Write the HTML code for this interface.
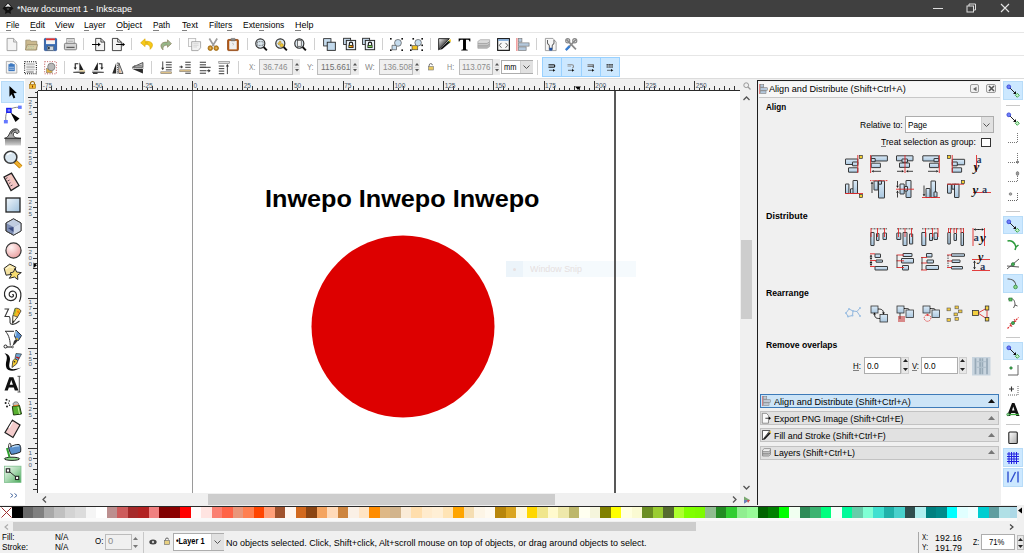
<!DOCTYPE html>
<html><head><meta charset="utf-8"><style>
*{box-sizing:border-box;margin:0;padding:0}
html,body{width:1024px;height:553px;overflow:hidden;background:#f0f0f0;font-family:"Liberation Sans",sans-serif;position:relative}
.a{position:absolute}
svg.a{overflow:visible}
.t{position:absolute;white-space:nowrap;line-height:1;transform-origin:0 0}
</style></head><body>
<div class="a" style="left:0px;top:0px;width:1024px;height:17px;background:#404040"></div>
<div class="a" style="left:0px;top:17px;width:1024px;height:15px;background:#fff"></div>
<div class="a" style="left:0px;top:32px;width:1024px;height:1px;background:#e6e6e6"></div>
<div class="a" style="left:0px;top:33px;width:1024px;height:22px;background:#fff"></div>
<div class="a" style="left:0px;top:55px;width:1024px;height:1px;background:#e6e6e6"></div>
<div class="a" style="left:0px;top:56px;width:1024px;height:22px;background:#fff"></div>
<div class="a" style="left:0px;top:78px;width:1024px;height:1px;background:#dcdcdc"></div>
<div class="a" style="left:0px;top:79px;width:25px;height:426px;background:#fff"></div>
<div class="a" style="left:25px;top:79px;width:715px;height:12px;background:#f0f0f0"></div>
<div class="a" style="left:25px;top:91px;width:13px;height:402px;background:#f0f0f0"></div>
<div class="a" style="left:38px;top:91px;width:702px;height:402px;background:#fff"></div>
<div class="a" style="left:740px;top:79px;width:17px;height:426px;background:#f0f0f0"></div>
<div class="a" style="left:25px;top:493px;width:715px;height:12px;background:#f0f0f0"></div>
<div class="a" style="left:757px;top:80px;width:243px;height:425px;background:#f0f0f0"></div>
<div class="a" style="left:1001px;top:79px;width:23px;height:426px;background:#fff"></div>
<div class="a" style="left:0px;top:506px;width:1017px;height:15px;background:#f9f9f9"></div>
<div class="a" style="left:0px;top:506px;width:1017px;height:1px;background:#2a2a2a"></div>
<div class="a" style="left:1017px;top:505px;width:7px;height:16px;background:#f0f0f0"></div>
<div class="a" style="left:0px;top:521px;width:1024px;height:32px;background:#f0f0f0"></div>
<div class="t" style="left:17.00px;top:4.37px;font-size:9.6px;color:#fff;transform:scaleX(0.9376);">*New document 1 - Inkscape</div>
<div class="t" style="left:6.20px;top:21.33px;font-size:9.3px;color:#000;transform:scaleX(0.8878);">File</div><div class="a" style="left:6.20px;top:30.40px;width:5.04px;height:1px;background:#808080"></div>
<div class="t" style="left:30.00px;top:21.33px;font-size:9.3px;color:#000;transform:scaleX(0.9363);">Edit</div><div class="a" style="left:30.00px;top:30.40px;width:5.81px;height:1px;background:#808080"></div>
<div class="t" style="left:55.00px;top:21.33px;font-size:9.3px;color:#000;transform:scaleX(0.9608);">View</div><div class="a" style="left:55.00px;top:30.40px;width:5.96px;height:1px;background:#808080"></div>
<div class="t" style="left:84.40px;top:21.33px;font-size:9.3px;color:#000;transform:scaleX(0.9288);">Layer</div><div class="a" style="left:84.40px;top:30.40px;width:4.80px;height:1px;background:#808080"></div>
<div class="t" style="left:116.40px;top:21.33px;font-size:9.3px;color:#000;transform:scaleX(0.9714);">Object</div><div class="a" style="left:116.40px;top:30.40px;width:7.02px;height:1px;background:#808080"></div>
<div class="t" style="left:153.20px;top:21.33px;font-size:9.3px;color:#000;transform:scaleX(0.8889);">Path</div><div class="a" style="left:153.20px;top:30.40px;width:5.51px;height:1px;background:#808080"></div>
<div class="t" style="left:181.70px;top:21.33px;font-size:9.3px;color:#000;transform:scaleX(0.9326);">Text</div><div class="a" style="left:181.70px;top:30.40px;width:5.30px;height:1px;background:#808080"></div>
<div class="t" style="left:208.50px;top:21.33px;font-size:9.3px;color:#000;transform:scaleX(0.9167);">Filters</div><div class="a" style="left:227.44px;top:30.40px;width:4.26px;height:1px;background:#808080"></div>
<div class="t" style="left:242.50px;top:21.33px;font-size:9.3px;color:#000;transform:scaleX(0.9082);">Extensions</div><div class="a" style="left:259.39px;top:30.40px;width:4.70px;height:1px;background:#808080"></div>
<div class="t" style="left:294.70px;top:21.33px;font-size:9.3px;color:#000;transform:scaleX(0.9623);">Help</div><div class="a" style="left:294.70px;top:30.40px;width:6.46px;height:1px;background:#808080"></div>
<div class="a" style="left:12.00px;top:507px;width:10.50px;height:11px;background:#000000"></div><div class="a" style="left:22.50px;top:507px;width:10.50px;height:11px;background:#696969"></div><div class="a" style="left:33.00px;top:507px;width:10.50px;height:11px;background:#808080"></div><div class="a" style="left:43.50px;top:507px;width:10.50px;height:11px;background:#a9a9a9"></div><div class="a" style="left:54.00px;top:507px;width:10.50px;height:11px;background:#c0c0c0"></div><div class="a" style="left:64.50px;top:507px;width:10.50px;height:11px;background:#d3d3d3"></div><div class="a" style="left:75.00px;top:507px;width:10.50px;height:11px;background:#dcdcdc"></div><div class="a" style="left:85.50px;top:507px;width:10.50px;height:11px;background:#f5f5f5"></div><div class="a" style="left:96.00px;top:507px;width:10.50px;height:11px;background:#ffffff"></div><div class="a" style="left:106.50px;top:507px;width:10.50px;height:11px;background:#bc8f8f"></div><div class="a" style="left:117.00px;top:507px;width:10.50px;height:11px;background:#cd5c5c"></div><div class="a" style="left:127.50px;top:507px;width:10.50px;height:11px;background:#a52a2a"></div><div class="a" style="left:138.00px;top:507px;width:10.50px;height:11px;background:#b22222"></div><div class="a" style="left:148.50px;top:507px;width:10.50px;height:11px;background:#f08080"></div><div class="a" style="left:159.00px;top:507px;width:10.50px;height:11px;background:#800000"></div><div class="a" style="left:169.50px;top:507px;width:10.50px;height:11px;background:#8b0000"></div><div class="a" style="left:180.00px;top:507px;width:10.50px;height:11px;background:#ff0000"></div><div class="a" style="left:190.50px;top:507px;width:10.50px;height:11px;background:#fffafa"></div><div class="a" style="left:201.00px;top:507px;width:10.50px;height:11px;background:#ffe4e1"></div><div class="a" style="left:211.50px;top:507px;width:10.50px;height:11px;background:#fa8072"></div><div class="a" style="left:222.00px;top:507px;width:10.50px;height:11px;background:#ff6347"></div><div class="a" style="left:232.50px;top:507px;width:10.50px;height:11px;background:#e9967a"></div><div class="a" style="left:243.00px;top:507px;width:10.50px;height:11px;background:#ff7f50"></div><div class="a" style="left:253.50px;top:507px;width:10.50px;height:11px;background:#ff4500"></div><div class="a" style="left:264.00px;top:507px;width:10.50px;height:11px;background:#ffa07a"></div><div class="a" style="left:274.50px;top:507px;width:10.50px;height:11px;background:#a0522d"></div><div class="a" style="left:285.00px;top:507px;width:10.50px;height:11px;background:#fff5ee"></div><div class="a" style="left:295.50px;top:507px;width:10.50px;height:11px;background:#d2691e"></div><div class="a" style="left:306.00px;top:507px;width:10.50px;height:11px;background:#8b4513"></div><div class="a" style="left:316.50px;top:507px;width:10.50px;height:11px;background:#f4a460"></div><div class="a" style="left:327.00px;top:507px;width:10.50px;height:11px;background:#ffdab9"></div><div class="a" style="left:337.50px;top:507px;width:10.50px;height:11px;background:#cd853f"></div><div class="a" style="left:348.00px;top:507px;width:10.50px;height:11px;background:#faf0e6"></div><div class="a" style="left:358.50px;top:507px;width:10.50px;height:11px;background:#ffe4c4"></div><div class="a" style="left:369.00px;top:507px;width:10.50px;height:11px;background:#ff8c00"></div><div class="a" style="left:379.50px;top:507px;width:10.50px;height:11px;background:#deb887"></div><div class="a" style="left:390.00px;top:507px;width:10.50px;height:11px;background:#d2b48c"></div><div class="a" style="left:400.50px;top:507px;width:10.50px;height:11px;background:#faebd7"></div><div class="a" style="left:411.00px;top:507px;width:10.50px;height:11px;background:#ffdead"></div><div class="a" style="left:421.50px;top:507px;width:10.50px;height:11px;background:#ffebcd"></div><div class="a" style="left:432.00px;top:507px;width:10.50px;height:11px;background:#ffefd5"></div><div class="a" style="left:442.50px;top:507px;width:10.50px;height:11px;background:#ffe4b5"></div><div class="a" style="left:453.00px;top:507px;width:10.50px;height:11px;background:#ffa500"></div><div class="a" style="left:463.50px;top:507px;width:10.50px;height:11px;background:#f5deb3"></div><div class="a" style="left:474.00px;top:507px;width:10.50px;height:11px;background:#fdf5e6"></div><div class="a" style="left:484.50px;top:507px;width:10.50px;height:11px;background:#fffaf0"></div><div class="a" style="left:495.00px;top:507px;width:10.50px;height:11px;background:#b8860b"></div><div class="a" style="left:505.50px;top:507px;width:10.50px;height:11px;background:#daa520"></div><div class="a" style="left:516.00px;top:507px;width:10.50px;height:11px;background:#fff8dc"></div><div class="a" style="left:526.50px;top:507px;width:10.50px;height:11px;background:#ffd700"></div><div class="a" style="left:537.00px;top:507px;width:10.50px;height:11px;background:#f0e68c"></div><div class="a" style="left:547.50px;top:507px;width:10.50px;height:11px;background:#fffacd"></div><div class="a" style="left:558.00px;top:507px;width:10.50px;height:11px;background:#eee8aa"></div><div class="a" style="left:568.50px;top:507px;width:10.50px;height:11px;background:#bdb76b"></div><div class="a" style="left:579.00px;top:507px;width:10.50px;height:11px;background:#fffff0"></div><div class="a" style="left:589.50px;top:507px;width:10.50px;height:11px;background:#f5f5dc"></div><div class="a" style="left:600.00px;top:507px;width:10.50px;height:11px;background:#808000"></div><div class="a" style="left:610.50px;top:507px;width:10.50px;height:11px;background:#ffff00"></div><div class="a" style="left:621.00px;top:507px;width:10.50px;height:11px;background:#ffffe0"></div><div class="a" style="left:631.50px;top:507px;width:10.50px;height:11px;background:#fafad2"></div><div class="a" style="left:642.00px;top:507px;width:10.50px;height:11px;background:#6b8e23"></div><div class="a" style="left:652.50px;top:507px;width:10.50px;height:11px;background:#9acd32"></div><div class="a" style="left:663.00px;top:507px;width:10.50px;height:11px;background:#556b2f"></div><div class="a" style="left:673.50px;top:507px;width:10.50px;height:11px;background:#adff2f"></div><div class="a" style="left:684.00px;top:507px;width:10.50px;height:11px;background:#7fff00"></div><div class="a" style="left:694.50px;top:507px;width:10.50px;height:11px;background:#7cfc00"></div><div class="a" style="left:705.00px;top:507px;width:10.50px;height:11px;background:#8fbc8f"></div><div class="a" style="left:715.50px;top:507px;width:10.50px;height:11px;background:#228b22"></div><div class="a" style="left:726.00px;top:507px;width:10.50px;height:11px;background:#32cd32"></div><div class="a" style="left:736.50px;top:507px;width:10.50px;height:11px;background:#90ee90"></div><div class="a" style="left:747.00px;top:507px;width:10.50px;height:11px;background:#98fb98"></div><div class="a" style="left:757.50px;top:507px;width:10.50px;height:11px;background:#006400"></div><div class="a" style="left:768.00px;top:507px;width:10.50px;height:11px;background:#008000"></div><div class="a" style="left:778.50px;top:507px;width:10.50px;height:11px;background:#00ff00"></div><div class="a" style="left:789.00px;top:507px;width:10.50px;height:11px;background:#f0fff0"></div><div class="a" style="left:799.50px;top:507px;width:10.50px;height:11px;background:#2e8b57"></div><div class="a" style="left:810.00px;top:507px;width:10.50px;height:11px;background:#3cb371"></div><div class="a" style="left:820.50px;top:507px;width:10.50px;height:11px;background:#00ff7f"></div><div class="a" style="left:831.00px;top:507px;width:10.50px;height:11px;background:#f5fffa"></div><div class="a" style="left:841.50px;top:507px;width:10.50px;height:11px;background:#00fa9a"></div><div class="a" style="left:852.00px;top:507px;width:10.50px;height:11px;background:#66cdaa"></div><div class="a" style="left:862.50px;top:507px;width:10.50px;height:11px;background:#7fffd4"></div><div class="a" style="left:873.00px;top:507px;width:10.50px;height:11px;background:#40e0d0"></div><div class="a" style="left:883.50px;top:507px;width:10.50px;height:11px;background:#20b2aa"></div><div class="a" style="left:894.00px;top:507px;width:10.50px;height:11px;background:#48d1cc"></div><div class="a" style="left:904.50px;top:507px;width:10.50px;height:11px;background:#2f4f4f"></div><div class="a" style="left:915.00px;top:507px;width:10.50px;height:11px;background:#afeeee"></div><div class="a" style="left:925.50px;top:507px;width:10.50px;height:11px;background:#008080"></div><div class="a" style="left:936.00px;top:507px;width:10.50px;height:11px;background:#008b8b"></div><div class="a" style="left:946.50px;top:507px;width:10.50px;height:11px;background:#00ffff"></div><div class="a" style="left:957.00px;top:507px;width:10.50px;height:11px;background:#e0ffff"></div><div class="a" style="left:967.50px;top:507px;width:10.50px;height:11px;background:#f0ffff"></div><div class="a" style="left:978.00px;top:507px;width:10.50px;height:11px;background:#00ced1"></div><div class="a" style="left:988.50px;top:507px;width:10.50px;height:11px;background:#5f9ea0"></div><div class="a" style="left:999.00px;top:507px;width:10.50px;height:11px;background:#b0e0e6"></div><div class="a" style="left:1009.50px;top:507px;width:7.50px;height:11px;background:#add8e6"></div>
<svg class="a" style="left:1px;top:507px" width="11" height="11" viewBox="0 0 11 11"><rect x="0" y="0" width="11" height="11" fill="#fff"/><path d="M0.5 0.5L10.5 10.5M10.5 0.5L0.5 10.5" stroke="#a03030" stroke-width="1"/></svg>
<svg class="a" style="left:1016px;top:506px" width="8" height="9" viewBox="0 0 8 9"><path d="M6 1.5L6 7.5L2 4.5Z" fill="#000"/></svg>
<svg class="a" style="left:5.50px;top:37.50px" width="11.50" height="13.00" viewBox="0 0 16 16" preserveAspectRatio="none"><path d="M1.5 0.5H10.5L15 5V15.5H1.5Z" fill="#f4f4f4" stroke="#8c8c8c"/><path d="M10.5 0.5V5H15" fill="#e0e0e0" stroke="#9a9a9a"/></svg>
<svg class="a" style="left:24.50px;top:38.50px" width="13.00" height="12.00" viewBox="0 0 16 16" preserveAspectRatio="none"><path d="M1 1.5H6L7.5 3H14.5V14.5H1Z" fill="#cbb98e" stroke="#9a8d6a"/><path d="M0.5 14.5L3 7.5H15.5L13.5 14.5Z" fill="#d9cba3" stroke="#978a66"/><path d="M4 10H12M3.5 12.5H11.5" stroke="#9ec09a" stroke-width="1" stroke-dasharray="1 1"/></svg>
<svg class="a" style="left:43.50px;top:37.50px" width="13.00" height="13.00" viewBox="0 0 16 16" preserveAspectRatio="none"><rect x="0.5" y="0.5" width="15" height="15" rx="1" fill="#3b6db4" stroke="#2a4f90"/><rect x="2.5" y="0.5" width="11" height="7" fill="#f4f4f4"/><rect x="2.5" y="0.5" width="11" height="2.2" fill="#e03030"/><rect x="4" y="10" width="8" height="5.5" fill="#cfd6dc" stroke="#304050" stroke-width="0.6"/><rect x="5" y="11" width="2" height="3" fill="#203040"/></svg>
<svg class="a" style="left:63.50px;top:37.50px" width="13.00" height="13.00" viewBox="0 0 16 16" preserveAspectRatio="none"><rect x="3.5" y="0.5" width="9" height="7" fill="#fafafa" stroke="#808080"/><path d="M5 2.5H11M5 4.5H11" stroke="#a0a0a0"/><rect x="0.5" y="6.5" width="15" height="8" rx="1.5" fill="#d4d4d4" stroke="#6a6a6a"/><path d="M3 11.5H13" stroke="#555" stroke-width="1.4"/></svg>
<div class="a" style="left:83px;top:38px;width:1px;height:12px;background:#d0d0d0"></div>
<svg class="a" style="left:91.50px;top:37.50px" width="13.00" height="13.00" viewBox="0 0 16 16" preserveAspectRatio="none"><path d="M4.5 0.5H11L15.5 5V15.5H4.5Z" fill="#f2f2f2" stroke="#222"/><path d="M11 0.5V5H15.5" fill="none" stroke="#222"/><path d="M0 8H10" stroke="#000" stroke-width="1.2"/><path d="M7.5 5.5L10.5 8L7.5 10.5Z" fill="#000"/></svg>
<svg class="a" style="left:111.50px;top:37.50px" width="13.00" height="13.00" viewBox="0 0 16 16" preserveAspectRatio="none"><path d="M0.5 0.5H7L11.5 5V15.5H0.5Z" fill="#f2f2f2" stroke="#222"/><path d="M7 0.5V5H11.5" fill="none" stroke="#222"/><path d="M5 8H15" stroke="#000" stroke-width="1.2"/><path d="M13 5.5L16 8L13 10.5Z" fill="#000"/></svg>
<div class="a" style="left:131px;top:38px;width:1px;height:12px;background:#d0d0d0"></div>
<svg class="a" style="left:139.50px;top:38.00px" width="13.50" height="12.50" viewBox="0 0 16 16" preserveAspectRatio="none"><path d="M6 1L0.8 6.2L6 11V8.2C10 8 12.5 9.5 12 14.5C14.8 12 15.5 8.5 14 6.5C12.5 4.5 9.5 4 6 4.2Z" fill="#f6c919" stroke="#d9a400" stroke-width="0.8"/><path d="M6 6L9.5 6.5" stroke="#b98c00" stroke-width="0.6"/></svg>
<svg class="a" style="left:159.50px;top:38.50px" width="12.00" height="12.00" viewBox="0 0 16 16" preserveAspectRatio="none"><path d="M10 1L15.2 6.2L10 11V8.2C6 8 3.5 9.5 4 14.5C1.2 12 0.5 8.5 2 6.5C3.5 4.5 6.5 4 10 4.2Z" fill="#9bb58a" stroke="#8a7d5c" stroke-width="0.9"/><path d="M5 6L8 8M7 5L10 7" stroke="#6ec070" stroke-width="0.8" stroke-dasharray="1 1"/></svg>
<div class="a" style="left:179px;top:38px;width:1px;height:12px;background:#d0d0d0"></div>
<svg class="a" style="left:187.50px;top:37.50px" width="13.00" height="13.00" viewBox="0 0 16 16" preserveAspectRatio="none"><rect x="0.5" y="0.5" width="9" height="10" fill="#fafafa" stroke="#b8b8b8"/><path d="M4.5 4.5H15.5V12L12.5 15.5H4.5Z" fill="#f2f2f2" stroke="#9a9a9a"/><path d="M6.5 7H13M6.5 9H13M6.5 11H11" stroke="#d0d0d0"/></svg>
<svg class="a" style="left:207.00px;top:37.50px" width="12.50" height="13.00" viewBox="0 0 16 16" preserveAspectRatio="none"><path d="M3 0.5L9 10M13 0.5L7 10" stroke="#9c9c9c" stroke-width="2.2"/><circle cx="4.2" cy="12.5" r="2.9" fill="#c98d24" stroke="#9a6410"/><circle cx="11.8" cy="12.5" r="2.9" fill="#c98d24" stroke="#9a6410"/><circle cx="4.2" cy="12.5" r="1" fill="#e8c070"/><circle cx="11.8" cy="12.5" r="1" fill="#e8c070"/></svg>
<svg class="a" style="left:227.00px;top:37.50px" width="12.00" height="13.00" viewBox="0 0 16 16" preserveAspectRatio="none"><rect x="0.8" y="1.8" width="14.4" height="13.7" rx="1.2" fill="#b65a14" stroke="#8a3c08"/><rect x="3" y="3.5" width="10" height="10.5" fill="#f0f0f0"/><rect x="5" y="0.5" width="6" height="3" rx="1" fill="#888" stroke="#555" stroke-width="0.6"/><path d="M7 6.5C9 6 9 8 8 9" stroke="#b0b0b0" fill="none"/></svg>
<div class="a" style="left:247px;top:38px;width:1px;height:12px;background:#d0d0d0"></div>
<svg class="a" style="left:255.30px;top:37.50px" width="12.50" height="13.00" viewBox="0 0 16 16" preserveAspectRatio="none"><circle cx="6.8" cy="6.8" r="5.8" fill="#dbe7ef" stroke="#2e2e2e" stroke-width="1.5"/><rect x="3.2" y="4.5" width="7.2" height="4.6" fill="none" stroke="#555" stroke-width="0.9" stroke-dasharray="1.2 0.8"/><path d="M11 11L15.2 15.2" stroke="#111" stroke-width="2.4"/></svg>
<svg class="a" style="left:275.00px;top:37.50px" width="12.50" height="13.00" viewBox="0 0 16 16" preserveAspectRatio="none"><circle cx="6.8" cy="6.8" r="5.8" fill="#dbe7ef" stroke="#2e2e2e" stroke-width="1.5"/><path d="M3.5 7L6.5 3.5L8 5L5 8.5Z" fill="#e8c040" stroke="#a07820" stroke-width="0.6"/><circle cx="8.5" cy="9" r="2.2" fill="#f0c830" stroke="#a07820" stroke-width="0.6"/><path d="M11 11L15.2 15.2" stroke="#111" stroke-width="2.4"/></svg>
<svg class="a" style="left:294.30px;top:37.50px" width="12.50" height="13.00" viewBox="0 0 16 16" preserveAspectRatio="none"><circle cx="6.8" cy="6.8" r="5.8" fill="#dbe7ef" stroke="#2e2e2e" stroke-width="1.5"/><rect x="4.5" y="2.8" width="4.8" height="7.4" fill="#f4f4f4" stroke="#444" stroke-width="0.9"/><path d="M11 11L15.2 15.2" stroke="#111" stroke-width="2.4"/></svg>
<div class="a" style="left:314px;top:38px;width:1px;height:12px;background:#d0d0d0"></div>
<svg class="a" style="left:322.50px;top:37.50px" width="13.00" height="13.00" viewBox="0 0 16 16" preserveAspectRatio="none"><rect x="0.8" y="0.8" width="9" height="9" fill="#c6dcee" stroke="#222" stroke-width="1"/><rect x="5.2" y="5.2" width="10" height="10" fill="#c2d9ec" stroke="#222" stroke-width="1.1"/></svg>
<svg class="a" style="left:341.60px;top:36px" width="16" height="16" viewBox="0 0 16 16"><rect x="1.6" y="2.3" width="7" height="6.2" fill="#c8dcee" stroke="#2a2a2a" stroke-width="0.9"/><rect x="4.3" y="4.4" width="9.3" height="9.3" fill="#dce8f2" stroke="#2a2a2a" stroke-width="1"/><rect x="5.5" y="5.6" width="6.9" height="6.9" fill="#f4f8fb"/><path d="M7.3 9V7.8A1.7 1.7 0 0 1 10.7 7.8V9" stroke="#111" fill="none" stroke-width="1.1"/><rect x="6.5" y="9" width="5" height="3" fill="#111"/><rect x="7.2" y="9.7" width="3.6" height="1.5" fill="#f0d020"/><rect x="9.5" y="9.7" width="1.3" height="1.5" fill="#d04010"/></svg>
<svg class="a" style="left:361.30px;top:36px" width="16" height="16" viewBox="0 0 16 16"><rect x="1.6" y="2.3" width="7" height="6.2" fill="#c8dcee" stroke="#2a2a2a" stroke-width="0.9"/><rect x="4.3" y="4.4" width="9.3" height="9.3" fill="#dce8f2" stroke="#2a2a2a" stroke-width="1"/><rect x="5.5" y="5.6" width="6.9" height="6.9" fill="#f4f8fb"/><path d="M7.3 9V7.8A1.7 1.7 0 0 1 10.7 7.8V9" stroke="#111" fill="none" stroke-width="1.1"/><rect x="6.5" y="9" width="5" height="3" fill="#111"/><rect x="7.2" y="9.7" width="3.6" height="1.5" fill="#90e070"/><rect x="9.5" y="9.7" width="1.3" height="1.5" fill="#60c040"/></svg>
<div class="a" style="left:382px;top:38px;width:1px;height:12px;background:#d0d0d0"></div>
<svg class="a" style="left:390.00px;top:37.50px" width="13.00" height="13.00" viewBox="0 0 16 16" preserveAspectRatio="none"><g fill="#111"><rect x="0" y="0" width="2" height="2"/><rect x="14" y="0" width="2" height="2"/><rect x="0" y="14" width="2" height="2"/><rect x="14" y="14" width="2" height="2"/></g><path d="M2.5 9L8 9L8 14.5L2.5 14.5Z" fill="#c6dcee" stroke="#444" stroke-width="0.8"/><circle cx="9.8" cy="6" r="4.2" fill="#c6dcee" stroke="#444" stroke-width="0.8"/></svg>
<svg class="a" style="left:409.50px;top:37.50px" width="13.00" height="13.00" viewBox="0 0 16 16" preserveAspectRatio="none"><g fill="#111"><rect x="3" y="0" width="2" height="2"/><rect x="14" y="0" width="2" height="2"/><rect x="0" y="14" width="2" height="2"/><rect x="14" y="14" width="2" height="2"/><rect x="0" y="8" width="2" height="2"/><rect x="14" y="8" width="2" height="2"/></g><rect x="2.5" y="9.5" width="7" height="5" fill="#f0c020" stroke="#444" stroke-width="0.8"/><circle cx="10" cy="5.8" r="4" fill="#c6dcee" stroke="#444" stroke-width="0.8"/></svg>
<div class="a" style="left:429.5px;top:38px;width:1px;height:12px;background:#d0d0d0"></div>
<svg class="a" style="left:438.00px;top:38.00px" width="13.00" height="12.50" viewBox="0 0 16 16" preserveAspectRatio="none"><defs><linearGradient id="gfs" x1="0" y1="0" x2="1" y2="1"><stop offset="0" stop-color="#fff"/><stop offset="0.6" stop-color="#333"/><stop offset="1" stop-color="#000"/></linearGradient></defs><path d="M0.8 0.8H14L12 3L2.5 13.5L0.8 15.2Z" fill="url(#gfs)" stroke="#111" stroke-width="1.1"/><path d="M1.5 15L13 3.5L15.5 5L5 14.5Z" fill="#111"/><path d="M13 3.5L15.5 1.2L15.8 5Z" fill="#f0c000"/><path d="M12.5 4.5L14 6" stroke="#30a030" stroke-width="1"/></svg>
<svg class="a" style="left:457.50px;top:37.50px" width="13.00" height="13.00" viewBox="0 0 16 16" preserveAspectRatio="none"><path d="M0.8 0.5H15.2V4.2H14.2C14 2.8 13.4 2.2 11.5 2.2H9.8V13.2C9.8 14.2 10.5 14.5 12 14.6V15.5H4V14.6C5.5 14.5 6.2 14.2 6.2 13.2V2.2H4.5C2.6 2.2 2 2.8 1.8 4.2H0.8Z" fill="#000"/></svg>
<svg class="a" style="left:476.50px;top:38.50px" width="13.50" height="11.00" viewBox="0 0 16 16" preserveAspectRatio="none"><path d="M1 3.5L4 1H15V4L12 6.5H1Z" fill="#dcdcdc" stroke="#999" stroke-width="0.8"/><path d="M1 6.5H12L15 4V7.5L12 10H1Z" fill="#c8c8c8" stroke="#999" stroke-width="0.8"/><path d="M1 10H12L15 7.5V11L12 13.5H1Z" fill="#b8b8b8" stroke="#999" stroke-width="0.8"/></svg>
<svg class="a" style="left:496.50px;top:37.50px" width="13.00" height="13.00" viewBox="0 0 16 16" preserveAspectRatio="none"><rect x="0.8" y="0.8" width="14.4" height="14.4" fill="#f8f8f8" stroke="#111" stroke-width="1.4"/><rect x="1.5" y="1.5" width="13" height="2" fill="#7aa7d8"/><path d="M5.5 6L2.8 9L5.5 12M10.5 6L13.2 9L10.5 12" stroke="#555" fill="none" stroke-width="1.2"/></svg>
<svg class="a" style="left:515.50px;top:37.50px" width="13.50" height="13.00" viewBox="0 0 16 16" preserveAspectRatio="none"><rect x="0" y="0" width="2" height="16" fill="#f0a0a0"/><rect x="3" y="0.5" width="4" height="4.5" fill="#b4c8dc" stroke="#777" stroke-width="0.8"/><rect x="3" y="6" width="12.5" height="4" fill="#b4c8dc" stroke="#777" stroke-width="0.8"/><rect x="3" y="11" width="9" height="4.5" fill="#b4c8dc" stroke="#777" stroke-width="0.8"/></svg>
<div class="a" style="left:536px;top:38px;width:1px;height:12px;background:#d0d0d0"></div>
<svg class="a" style="left:545.00px;top:37.50px" width="11.50" height="13.00" viewBox="0 0 16 16" preserveAspectRatio="none"><path d="M0.5 0.5H11L15.5 5V15.5H0.5Z" fill="#f6f6f6" stroke="#888"/><path d="M3.5 2.5V6C3.5 7.5 6 8 6 9.5V14.5M12.5 2.5V6C12.5 7.5 10 8 10 9.5V14.5" stroke="#555" stroke-width="1.3" fill="none"/><rect x="6" y="12" width="4" height="3.5" fill="#2050a0"/></svg>
<svg class="a" style="left:564.50px;top:37.50px" width="12.50" height="13.00" viewBox="0 0 16 16" preserveAspectRatio="none"><path d="M2 2L14 14" stroke="#8a8a8a" stroke-width="2.2"/><path d="M14 2L2 14" stroke="#8a8a8a" stroke-width="2.2"/><circle cx="12.5" cy="3.5" r="2.6" fill="none" stroke="#888" stroke-width="1.5"/><circle cx="3.5" cy="3.5" r="2.6" fill="none" stroke="#888" stroke-width="1.5"/><path d="M1 15L6 10" stroke="#3a7ed0" stroke-width="3"/></svg>
<svg class="a" style="left:5.80px;top:61.00px" width="11.20" height="12.50" viewBox="0 0 16 16" preserveAspectRatio="none"><path d="M0.5 0.5H11L15.5 5V15.5H0.5Z" fill="#f4f4f4" stroke="#9a9a9a"/><rect x="3.5" y="4" width="9" height="9" fill="#3c78c0"/><path d="M4.5 8H11.5M4.5 10.5H11.5" stroke="#dfe8f4" stroke-width="0.9"/><rect x="5.5" y="3" width="4" height="3" fill="#3c78c0"/></svg>
<svg class="a" style="left:24.00px;top:60.50px" width="13.00" height="13.50" viewBox="0 0 16 16" preserveAspectRatio="none"><rect x="0.8" y="0.8" width="14.4" height="14.4" fill="none" stroke="#111" stroke-width="1.3" stroke-dasharray="1.3 1.3"/><path d="M3 4H13M3 7H13M3 10H13M3 13H12" stroke="#999" stroke-width="1.8"/><path d="M3 4H13M3 7H13M3 10H13" stroke="#e4e4e4" stroke-width="0.8"/></svg>
<svg class="a" style="left:43.50px;top:60.50px" width="13.00" height="13.50" viewBox="0 0 16 16" preserveAspectRatio="none"><rect x="0.8" y="0.8" width="14.4" height="14.4" fill="none" stroke="#b03030" stroke-width="1" stroke-dasharray="1.2 1.8"/><rect x="3" y="9" width="7" height="5" fill="#e0b040" stroke="#777" stroke-width="0.6"/><circle cx="9" cy="7" r="4.5" fill="#b8b8b8" stroke="#666" stroke-width="0.8"/></svg>
<div class="a" style="left:64px;top:61px;width:1px;height:13px;background:#d0d0d0"></div>
<svg class="a" style="left:72.50px;top:61.50px" width="12.30" height="12.00" viewBox="0 0 12 12" preserveAspectRatio="none"><path d="M6.2 0.3L6.2 8.5L10.5 8.5Z" fill="#1e1e1e"/><path d="M0.3 10.3L6.2 8.2L11.8 7.8L11.8 10.3Z" fill="#cfcfcf"/><path d="M6.5 8.6L11.5 8.3L11.5 9.8L6.5 9.8Z" fill="#f0d898"/><path d="M0.3 10.3H11.8" stroke="#222" stroke-width="0.9"/><path d="M6.5 11.3H11" stroke="#222" stroke-width="1.2"/><path d="M5.2 1.7H2.2V6" stroke="#222" fill="none" stroke-width="1.1"/><path d="M0.6 5.5H3.8L2.2 7.8Z" fill="#222"/></svg>
<svg class="a" style="left:92.20px;top:61.50px" width="12.10" height="12.00" viewBox="0 0 12 12" preserveAspectRatio="none"><g transform="translate(12 0) scale(-1 1)"><path d="M6.2 0.3L6.2 8.5L10.5 8.5Z" fill="#1e1e1e"/><path d="M0.3 10.3L6.2 8.2L11.8 7.8L11.8 10.3Z" fill="#d4d4d4"/><path d="M0.3 10.3H11.8" stroke="#222" stroke-width="0.9"/><path d="M6.5 11.3H11" stroke="#222" stroke-width="1.2"/><path d="M5.2 1.7H2.2V6" stroke="#222" fill="none" stroke-width="1.1"/><path d="M0.6 5.5H3.8L2.2 7.8Z" fill="#222"/></g></svg>
<svg class="a" style="left:111.80px;top:61.50px" width="11.70" height="12.00" viewBox="0 0 12 12" preserveAspectRatio="none"><path d="M4.3 0.8V11.5H0.3Z" fill="#2a2a2a"/><path d="M7 0.8V11.5H11.3Z" fill="#d8d8d8" stroke="#333" stroke-width="0.8"/><path d="M7.5 6L9.5 10.5H7.5Z" fill="#e8b080"/><path d="M5.6 0.5V12" stroke="#555" stroke-width="1" stroke-dasharray="1.2 1"/></svg>
<svg class="a" style="left:131.80px;top:61.50px" width="11.70" height="12.00" viewBox="0 0 12 12" preserveAspectRatio="none"><path d="M11.2 0.5V5.2L0.5 5.2Z" fill="#c8c8c8" stroke="#333" stroke-width="0.8"/><path d="M11.2 7V11.5L0.5 7Z" fill="#2a2a2a"/><path d="M0.3 6.1H11.7" stroke="#444" stroke-width="1" stroke-dasharray="1.2 0.9"/><path d="M2 3.5H10" stroke="#777" stroke-width="0.8"/></svg>
<div class="a" style="left:150.5px;top:61px;width:1px;height:13px;background:#d0d0d0"></div>
<svg class="a" style="left:159.50px;top:60.50px" width="12.50" height="13.50" viewBox="0 0 16 16" preserveAspectRatio="none"><path d="M7.5 1.5 H15" stroke="#4a4a4a" stroke-width="1.3"/><path d="M7.5 4.5 H15" stroke="#4a4a4a" stroke-width="1.3"/><path d="M7.5 7.5 H15" stroke="#4a4a4a" stroke-width="1.3"/><path d="M7.5 10.5 H15" stroke="#4a4a4a" stroke-width="1.3"/><rect x="1" y="12.8" width="14" height="2.2" fill="#e8c888" stroke="#777" stroke-width="0.7"/><path d="M3.5 0.5V9" stroke="#333" stroke-width="1.1"/><path d="M1.5 8H5.5L3.5 11Z" fill="#333"/></svg>
<svg class="a" style="left:178.80px;top:60.50px" width="12.50" height="13.50" viewBox="0 0 16 16" preserveAspectRatio="none"><path d="M8 1.5 H15" stroke="#4a4a4a" stroke-width="1.3"/><path d="M8 4.5 H15" stroke="#4a4a4a" stroke-width="1.3"/><path d="M8 7.5 H15" stroke="#4a4a4a" stroke-width="1.3"/><path d="M8 14.5 H15" stroke="#4a4a4a" stroke-width="1.3"/><rect x="1" y="10.5" width="14" height="2.2" fill="#e8c888" stroke="#777" stroke-width="0.7"/><path d="M0.5 7H4" stroke="#333" stroke-width="1.1"/><path d="M2.5 5V9L5.2 7Z" fill="#444"/></svg>
<svg class="a" style="left:198.60px;top:60.50px" width="12.50" height="13.50" viewBox="0 0 16 16" preserveAspectRatio="none"><path d="M1 1.5 H9" stroke="#4a4a4a" stroke-width="1.3"/><path d="M1 4.5 H9" stroke="#4a4a4a" stroke-width="1.3"/><path d="M1 7.5 H9" stroke="#4a4a4a" stroke-width="1.3"/><path d="M1 11.5 H9" stroke="#4a4a4a" stroke-width="1.3"/><path d="M1 14.5 H9" stroke="#4a4a4a" stroke-width="1.3"/><path d="M1 7.5H15" stroke="#4a4a4a" stroke-width="1.3"/><path d="M9.5 11.5H13" stroke="#333" stroke-width="1.1"/><path d="M12 9.5V13.5L15 11.5Z" fill="#333"/></svg>
<svg class="a" style="left:217.80px;top:60.50px" width="12.50" height="13.50" viewBox="0 0 16 16" preserveAspectRatio="none"><rect x="1" y="0.8" width="14" height="2.2" fill="#ddd" stroke="#777" stroke-width="0.7"/><path d="M1 6 H8" stroke="#4a4a4a" stroke-width="1.3"/><path d="M1 9 H8" stroke="#4a4a4a" stroke-width="1.3"/><path d="M1 12 H8" stroke="#4a4a4a" stroke-width="1.3"/><path d="M1 15 H8" stroke="#4a4a4a" stroke-width="1.3"/><path d="M12 15.5V5" stroke="#333" stroke-width="1.1"/><path d="M10 6.5H14L12 3.5Z" fill="#333"/></svg>
<div class="a" style="left:237.5px;top:61px;width:1px;height:13px;background:#d0d0d0"></div>
<div class="t" style="left:248.60px;top:62.88px;font-size:9px;color:#8a8a8a;transform:scaleX(0.7526);">X:</div>
<div class="a" style="left:259px;top:59px;width:33.60000000000002px;height:16px;background:#f0f0f0;border:1px solid #bcbcbc"></div>
<div class="a" style="left:293.1px;top:59px;width:7.199999999999989px;height:16px;background:#ebebeb"></div>
<svg class="a" style="left:294.6px;top:62.5px" width="4" height="2.5" viewBox="0 0 4 2.5"><path d="M0 2.5L2 0L4 2.5Z" fill="#555"/></svg>
<svg class="a" style="left:294.6px;top:69px" width="4" height="2.5" viewBox="0 0 4 2.5"><path d="M0 0L2 2.5L4 0Z" fill="#555"/></svg>
<div class="a" style="left:293.6px;top:66.5px;width:5.699999999999989px;height:1px;background:#dcdcdc"></div>
<div class="t" style="left:262.60px;top:62.88px;font-size:9px;color:#8c8c8c;transform:scaleX(0.8828);">36.746</div>
<div class="t" style="left:306.60px;top:62.88px;font-size:9px;color:#8a8a8a;transform:scaleX(0.8243);">Y:</div>
<div class="a" style="left:317px;top:59px;width:33.5px;height:16px;background:#f0f0f0;border:1px solid #bcbcbc"></div>
<div class="a" style="left:351.0px;top:59px;width:7.5px;height:16px;background:#ebebeb"></div>
<svg class="a" style="left:352.5px;top:62.5px" width="4" height="2.5" viewBox="0 0 4 2.5"><path d="M0 2.5L2 0L4 2.5Z" fill="#555"/></svg>
<svg class="a" style="left:352.5px;top:69px" width="4" height="2.5" viewBox="0 0 4 2.5"><path d="M0 0L2 2.5L4 0Z" fill="#555"/></svg>
<div class="a" style="left:351.5px;top:66.5px;width:6.0px;height:1px;background:#dcdcdc"></div>
<div class="t" style="left:320.60px;top:62.88px;font-size:9px;color:#6f6f6f;transform:scaleX(0.9258);clip-path:inset(0 0 0 0)">115.661</div>
<div class="t" style="left:365.20px;top:62.88px;font-size:9px;color:#8a8a8a;transform:scaleX(0.9139);">W:</div>
<div class="a" style="left:379.2px;top:59px;width:33.400000000000034px;height:16px;background:#f0f0f0;border:1px solid #bcbcbc"></div>
<div class="a" style="left:413.1px;top:59px;width:7.399999999999977px;height:16px;background:#ebebeb"></div>
<svg class="a" style="left:414.6px;top:62.5px" width="4" height="2.5" viewBox="0 0 4 2.5"><path d="M0 2.5L2 0L4 2.5Z" fill="#555"/></svg>
<svg class="a" style="left:414.6px;top:69px" width="4" height="2.5" viewBox="0 0 4 2.5"><path d="M0 0L2 2.5L4 0Z" fill="#555"/></svg>
<div class="a" style="left:413.6px;top:66.5px;width:5.899999999999977px;height:1px;background:#dcdcdc"></div>
<div class="t" style="left:382.50px;top:62.88px;font-size:9px;color:#8c8c8c;transform:scaleX(0.9068);">136.508</div>
<svg class="a" style="left:428px;top:63px" width="6" height="7.5" viewBox="0 0 6 7.5"><path d="M1.2 3.5V2.2A1.6 1.6 0 0 1 4.4 2.2" stroke="#666" fill="none" stroke-width="0.9"/><rect x="0.5" y="3.5" width="5" height="3.5" fill="#e8c860" stroke="#777" stroke-width="0.6"/></svg>
<div class="t" style="left:447.30px;top:62.88px;font-size:9px;color:#8a8a8a;transform:scaleX(0.8000);">H:</div>
<div class="a" style="left:459px;top:59px;width:33.60000000000002px;height:16px;background:#f0f0f0;border:1px solid #bcbcbc"></div>
<div class="a" style="left:493.1px;top:59px;width:6.899999999999977px;height:16px;background:#ebebeb"></div>
<svg class="a" style="left:494.6px;top:62.5px" width="4" height="2.5" viewBox="0 0 4 2.5"><path d="M0 2.5L2 0L4 2.5Z" fill="#555"/></svg>
<svg class="a" style="left:494.6px;top:69px" width="4" height="2.5" viewBox="0 0 4 2.5"><path d="M0 0L2 2.5L4 0Z" fill="#555"/></svg>
<div class="a" style="left:493.6px;top:66.5px;width:5.399999999999977px;height:1px;background:#dcdcdc"></div>
<div class="t" style="left:462.30px;top:62.88px;font-size:9px;color:#8c8c8c;transform:scaleX(0.8913);">113.076</div>
<div class="a" style="left:501.3px;top:59.8px;width:32px;height:14.2px;background:#fff;border:1px solid #adadad"></div>
<div class="a" style="left:519.5px;top:60.8px;width:13px;height:12.2px;background:#e1e1e1;border-left:1px solid #cfcfcf"></div>
<svg class="a" style="left:522.5px;top:65px" width="7" height="4" viewBox="0 0 7 4"><path d="M0.5 0.5L3.5 3.5L6.5 0.5" stroke="#555" fill="none"/></svg>
<div class="t" style="left:503.50px;top:62.46px;font-size:9.5px;color:#000;transform:scaleX(0.7898);">mm</div>
<div class="a" style="left:537px;top:60px;width:1px;height:15px;background:#d0d0d0"></div>
<div class="a" style="left:542.2px;top:57.2px;width:77.4px;height:19.6px;background:#cce8ff;border:1px solid #99d1ff"></div>
<div class="a" style="left:561.4px;top:57.2px;width:1px;height:19.6px;background:#99d1ff"></div>
<div class="a" style="left:580.7px;top:57.2px;width:1px;height:19.6px;background:#99d1ff"></div>
<div class="a" style="left:600.2px;top:57.2px;width:1px;height:19.6px;background:#99d1ff"></div>
<svg class="a" style="left:548px;top:63.5px" width="8" height="8" viewBox="0 0 8 8"><path d="M0.5 0.8H6C7 0.8 7 3.2 6 3.2H0.5" stroke="#222" stroke-width="1.1" fill="none"/><path d="M0.5 2H6" stroke="#666" stroke-width="0.8"/><path d="M1 6.3H5.5" stroke="#333" stroke-width="0.7"/><path d="M5 4.9L7.3 6.3L5 7.7Z" fill="#111"/></svg>
<svg class="a" style="left:567.3px;top:63.5px" width="8" height="8" viewBox="0 0 8 8"><path d="M0.5 0.8H5C7 0.8 7 4 5 4" stroke="#888" stroke-width="1.1" fill="none"/><path d="M0.5 2.2H4" stroke="#999" stroke-width="0.8"/><path d="M1 6.3H5.5" stroke="#333" stroke-width="0.7"/><path d="M5 4.9L7.3 6.3L5 7.7Z" fill="#111"/></svg>
<svg class="a" style="left:586.8px;top:63.5px" width="8" height="8" viewBox="0 0 8 8"><path d="M0.5 0.8H6.5M0.5 2.4H6.5" stroke="#777" stroke-width="1.1"/><path d="M6.3 0.5V4" stroke="#333" stroke-width="0.8"/><path d="M1 6.3H5.5" stroke="#333" stroke-width="0.7"/><path d="M5 4.9L7.3 6.3L5 7.7Z" fill="#111"/></svg>
<svg class="a" style="left:606.3px;top:63.5px" width="8" height="8" viewBox="0 0 8 8"><path d="M0.5 0.8H7M0.5 3H7" stroke="#222" stroke-width="1.2"/><path d="M2.5 0.3V3.5M5 0.3V3.5" stroke="#ccc" stroke-width="0.5"/><path d="M1 6.3H5.5" stroke="#333" stroke-width="0.7"/><path d="M5 4.9L7.3 6.3L5 7.7Z" fill="#111"/></svg>
<div class="a" style="left:1.4px;top:81.2px;width:22.3px;height:21.4px;background:#cce8ff;border:1px solid #b8dcf8"></div>
<svg class="a" style="left:7.50px;top:84.50px" width="10.00" height="14.00" viewBox="0 0 14 16" preserveAspectRatio="none"><path d="M2 1L2 13.5L5.2 10.5L7.8 15.5L10.2 14.3L7.7 9.5L12.5 9.2Z" fill="#000"/></svg>
<svg class="a" style="left:0.00px;top:103.00px" width="26.00" height="24.00" viewBox="0 0 26 24" preserveAspectRatio="none"><path d="M11.7 5.5C14 4.5 16 4.3 18 4.3M6.5 10C5.8 12 5.5 14.5 5.8 17" stroke="#777" stroke-width="0.9" fill="none"/><rect x="6.1" y="4.8" width="5.6" height="5.2" fill="#1a20f0"/><rect x="7.6" y="6.3" width="2.6" height="2.2" fill="#8890f8"/><rect x="18" y="2.6" width="3.7" height="3.3" fill="#6478ff"/><rect x="3.9" y="17" width="3.9" height="3.4" fill="#6478ff"/><path d="M10.5 9.5L19.5 15.5L15.5 19Z" fill="#000"/></svg>
<svg class="a" style="left:0;top:125px" width="26" height="24" viewBox="0 0 26 24"><defs><linearGradient id="gtw" x1="0" y1="0" x2="0" y2="1"><stop offset="0" stop-color="#777"/><stop offset="1" stop-color="#d4d4d4"/></linearGradient></defs><rect x="5" y="13" width="16" height="7.5" fill="url(#gtw)"/><path d="M4.5 13.3C8 13 9 9.5 10.3 7C11.8 4.2 15 3.2 17.3 4.2C19.3 5 19.6 7.5 18 8.3C16.8 8.9 15.6 8 16.2 7.2C14.5 6.8 13 8 13.3 10.2C13.7 12.3 16 13.2 21 13.3Z" fill="#a8a8a8" stroke="#2a2a2a" stroke-width="0.9"/><path d="M11 9C12 6 14 5 16 5.2" stroke="#555" stroke-width="1.2" fill="none"/></svg>
<svg class="a" style="left:0;top:170px" width="26" height="24" viewBox="0 0 26 24"><path d="M4 7L11.5 3.2L19 15.5L11 20.5Z" fill="#f2c4c4" stroke="#1e1e1e" stroke-width="1.3"/><path d="M6 8.5L7.5 7.7M7.5 11L9.5 10M9 13.5L10.5 12.7M10.5 16L12.5 15" stroke="#333" stroke-width="0.8"/><path d="M10 6L15 14" stroke="#f8e0a0" stroke-width="1" stroke-dasharray="1 1.5"/></svg>
<svg class="a" style="left:2.50px;top:150.00px" width="19.50" height="18.50" viewBox="0 0 18 18" preserveAspectRatio="none"><path d="M10 10L16.5 16.5" stroke="#c08000" stroke-width="4"/><path d="M10.5 10.5L16.5 16.5" stroke="#f0b030" stroke-width="2.5"/><circle cx="7" cy="7" r="5.8" fill="#d8e6f0" stroke="#3a3a3a" stroke-width="1.4"/><path d="M4 5A3.5 3.5 0 0 1 8 3.2" stroke="#fff" stroke-width="1.2" fill="none"/></svg>
<svg class="a" style="left:5.00px;top:196.50px" width="16.00" height="16.00" viewBox="0 0 16 16" preserveAspectRatio="none"><defs><linearGradient id="grc" x1="0" y1="0" x2="1" y2="1"><stop offset="0" stop-color="#f0f6fb"/><stop offset="1" stop-color="#9ec0dc"/></linearGradient></defs><rect x="1" y="1" width="14" height="14" fill="url(#grc)" stroke="#222" stroke-width="1.3"/></svg>
<svg class="a" style="left:4.50px;top:218.00px" width="17.00" height="18.00" viewBox="0 0 17 18" preserveAspectRatio="none"><path d="M8.5 0.8L16 5V13L8.5 17.2L1 13V5Z" fill="#7e8eb4" stroke="#444" stroke-width="1"/><path d="M8.5 0.8L16 5L8.5 9L1 5Z" fill="#c0cce0"/><path d="M8.5 9V17.2L16 13V5Z" fill="#d0daea"/><path d="M3 10L8.5 14L8.5 9Z" fill="#3a4a80"/><path d="M8.5 0.8L16 5V13L8.5 17.2L1 13V5Z" fill="none" stroke="#444" stroke-width="1"/></svg>
<svg class="a" style="left:4.50px;top:241.50px" width="17.00" height="17.00" viewBox="0 0 17 17" preserveAspectRatio="none"><defs><radialGradient id="gel" cx="0.35" cy="0.3" r="0.8"><stop offset="0" stop-color="#fff4f4"/><stop offset="1" stop-color="#e89898"/></radialGradient></defs><circle cx="8.5" cy="8.5" r="7.6" fill="url(#gel)" stroke="#333" stroke-width="1.2"/></svg>
<svg class="a" style="left:0;top:260px" width="26" height="24" viewBox="0 0 26 24"><path d="M9.8 4.1L15.9 7.2L14 14L6.1 15.2L4.1 8.3Z" fill="#f4e2a0" stroke="#2a2a2a" stroke-width="1"/><path d="M15 8.3L16.6 12L21.3 12.6L17.6 15.2L17.8 19.6L14.5 17L9.3 18.3L11.5 14.8L10 13L13.5 12Z" fill="#f6dc70" stroke="#2a2a2a" stroke-width="1"/><path d="M6 9L9 6.5L13 8" stroke="#fff6d0" stroke-width="1.2" fill="none"/></svg>
<svg class="a" style="left:0;top:283px" width="26" height="24" viewBox="0 0 26 24"><path d="M12.3 11.8C13.3 11 14 12.5 13 13.5C11.8 14.6 9.5 13.8 9.2 11.8C8.8 9.3 11.5 7.6 13.8 8.3C16.8 9.2 17.3 13.3 15.4 15.6C13 18.5 8.2 18.2 5.9 15.3C3.2 12 4.3 6.5 8 4.2C11.8 1.8 17.5 3.2 19.8 7.2C21.6 10.3 21 15.5 19.3 18.7" stroke="#2a2a2a" fill="none" stroke-width="1.2"/></svg>
<svg class="a" style="left:0;top:305px" width="26" height="24" viewBox="0 0 26 24"><path d="M4.5 4H8.5L5 11.5H9C10.5 12 10 16 10 17.5C10.5 20 14 20.5 19.5 16" stroke="#3a3a3a" fill="none" stroke-width="1.1"/><path d="M12.5 18.3L13 10.5L15 3.5C17 2.5 20.5 4 21 6L17.5 12Z" fill="#f2b820" stroke="#333" stroke-width="0.8"/><path d="M15 3.5C16 5 15.5 8 13.5 10" stroke="#70c040" stroke-width="0.9" fill="none"/><path d="M12.5 18.3L13 10.5C14.5 11 16 11.5 17.5 12Z" fill="#fff8e0" stroke="#333" stroke-width="0.7"/><path d="M12.5 18.3L12.8 15.5L14.2 16Z" fill="#111"/><path d="M17.5 6L19 8" stroke="#f08000" stroke-width="1.5"/></svg>
<svg class="a" style="left:0;top:327px" width="26" height="24" viewBox="0 0 26 24"><path d="M5 4.3H14" stroke="#333" stroke-width="1.1"/><path d="M5.5 4.5C8 7 10 11 10.3 18.5" stroke="#333" stroke-width="1" fill="none"/><circle cx="5.5" cy="19.5" r="1.5" fill="#fff" stroke="#222" stroke-width="1"/><path d="M7 20H12.5" stroke="#222" stroke-width="1.1"/><circle cx="12.5" cy="20" r="0.9" fill="#fff" stroke="#222" stroke-width="0.7"/><path d="M12.5 19L14 14L16 12L18 13.5L15 17Z" fill="#333"/><path d="M16 12L14.5 9L16 3L21.5 8.5L18.5 13.5Z" fill="#5a90d0" stroke="#222" stroke-width="0.9"/><path d="M16 4L15.5 9" stroke="#b8e0f8" stroke-width="1.2"/><path d="M15.3 12L17.5 10.8L18.3 13Z" fill="#f0c020"/></svg>
<svg class="a" style="left:0;top:350px" width="26" height="24" viewBox="0 0 26 24"><path d="M4.5 3.5C8 3.5 10 6 10 9C10 12 8.5 15 9.5 17.5C11 20 15 19.5 21 17.5C17 20.5 12 21.5 8.5 20C5.5 18.5 5.5 14 6.5 10.5C7.3 7.5 7 5 4.5 3.5Z" fill="#0a0a0a"/><path d="M12 17.5L12.8 11L15 8.5L18 10.5L16.5 14Z" fill="#f0c830" stroke="#333" stroke-width="0.8"/><circle cx="14.5" cy="11.8" r="0.8" fill="#222"/><path d="M15 8.5L16 3.5L21.5 4L18 10.5Z" fill="#70a8d8" stroke="#333" stroke-width="0.7"/><path d="M15.8 7.5L18.8 9L19.5 7.5L16.5 6.5Z" fill="#c01818"/></svg>
<svg class="a" style="left:0;top:373px" width="26" height="24" viewBox="0 0 26 24"><path d="M4.5 17.5L9.3 4.2H13.3L18.5 17.5H14.8L13.8 14.5H8.8L7.8 17.5ZM9.7 11.7H12.9L11.3 7Z" fill="#111"/><path d="M17.5 3.3H20.5M19.3 3.3V19M17.5 19H20.5" stroke="#444" stroke-width="0.9"/></svg>
<svg class="a" style="left:0;top:395px" width="26" height="24" viewBox="0 0 26 24"><g fill="#1a1a1a"><circle cx="6.5" cy="4.8" r="1"/><circle cx="5.6" cy="8" r="1"/><circle cx="7" cy="11.5" r="1"/><circle cx="9.3" cy="6" r="0.7"/><circle cx="8.6" cy="8.2" r="0.6"/><circle cx="9.6" cy="10.2" r="0.7"/></g><path d="M13 9C13.5 6.5 17.5 6 18.5 8.5L19 10.5L13.5 11Z" fill="#c0c0c0" stroke="#555" stroke-width="0.7"/><path d="M12.3 11.5L19.5 10.5L21.5 19L13.5 20Z" fill="#58b030" stroke="#1e3a10" stroke-width="1"/><path d="M18 12L19.5 19" stroke="#c8f0a0" stroke-width="1"/><path d="M13.5 10.8L18.5 10" stroke="#f08020" stroke-width="1"/></svg>
<svg class="a" style="left:0;top:417px" width="26" height="24" viewBox="0 0 26 24"><path d="M12.5 3.2L20 8L13 20.5L5 15.5Z" fill="#f4cccc" stroke="#1e1e1e" stroke-width="1.2"/><path d="M12.5 5L9 11" stroke="#fff" stroke-width="1.2"/></svg>
<svg class="a" style="left:0;top:440px" width="26" height="24" viewBox="0 0 26 24"><ellipse cx="12" cy="18.8" rx="7.6" ry="1.6" fill="#8ad88a" stroke="#111" stroke-width="0.9"/><path d="M7 8C7.5 11 9 14 9.5 17.5" stroke="#30a030" stroke-width="2" fill="none"/><path d="M8.5 7.5C12 6 16 4 19 4.5C21 5 21 10 20.5 12C17 13.5 13 14.5 11 14.3C10 12 9 10 8.5 7.5Z" fill="#5a90cc" stroke="#111" stroke-width="0.9"/><path d="M12 7C15 6 17.5 5.5 19 6" stroke="#c8e4f8" stroke-width="1.3" fill="none"/><path d="M8.5 7.5C8.5 5 9 3 10 3.2C11 3.4 11 6 10.8 7" stroke="#222" stroke-width="0.9" fill="#fff"/></svg>
<svg class="a" style="left:0;top:462px" width="26" height="24" viewBox="0 0 26 24"><defs><linearGradient id="ggr" x1="0" y1="0" x2="1" y2="1"><stop offset="0" stop-color="#f4faf4"/><stop offset="0.5" stop-color="#a8d8b0"/><stop offset="1" stop-color="#48a858"/></linearGradient></defs><rect x="4.5" y="4.2" width="16.5" height="16.3" fill="url(#ggr)" stroke="#80c090" stroke-width="0.8"/><path d="M8 8.5L17 15.8" stroke="#333" stroke-width="1"/><rect x="6.3" y="6.8" width="3.4" height="3.4" fill="#fff" stroke="#222" stroke-width="1.1"/><rect x="15.5" y="14.3" width="3.2" height="3.2" fill="#fff" stroke="#222" stroke-width="1.1"/></svg>
<svg class="a" style="left:10px;top:493px" width="8" height="5" viewBox="0 0 8 5"><path d="M0.5 0.5L3 2.5L0.5 4.5M4.5 0.5L7 2.5L4.5 4.5" stroke="#4a6aa0" fill="none" stroke-width="1"/></svg>
<svg class="a" style="left:0;top:0" width="1024" height="553"><rect x="38" y="90" width="702" height="1" fill="#2a2a2a"/><rect x="41" y="81" width="1" height="9" fill="#333"/><rect x="46" y="88" width="1" height="2" fill="#333"/><rect x="51" y="86" width="1" height="4" fill="#333"/><rect x="56" y="88" width="1" height="2" fill="#333"/><rect x="61" y="86" width="1" height="4" fill="#333"/><rect x="66" y="88" width="1" height="2" fill="#333"/><rect x="71" y="86" width="1" height="4" fill="#333"/><rect x="76" y="88" width="1" height="2" fill="#333"/><rect x="81" y="86" width="1" height="4" fill="#333"/><rect x="87" y="88" width="1" height="2" fill="#333"/><rect x="92" y="81" width="1" height="9" fill="#333"/><rect x="97" y="88" width="1" height="2" fill="#333"/><rect x="102" y="86" width="1" height="4" fill="#333"/><rect x="107" y="88" width="1" height="2" fill="#333"/><rect x="112" y="86" width="1" height="4" fill="#333"/><rect x="117" y="88" width="1" height="2" fill="#333"/><rect x="122" y="86" width="1" height="4" fill="#333"/><rect x="127" y="88" width="1" height="2" fill="#333"/><rect x="132" y="86" width="1" height="4" fill="#333"/><rect x="137" y="88" width="1" height="2" fill="#333"/><rect x="142" y="81" width="1" height="9" fill="#333"/><rect x="147" y="88" width="1" height="2" fill="#333"/><rect x="152" y="86" width="1" height="4" fill="#333"/><rect x="157" y="88" width="1" height="2" fill="#333"/><rect x="162" y="86" width="1" height="4" fill="#333"/><rect x="167" y="88" width="1" height="2" fill="#333"/><rect x="172" y="86" width="1" height="4" fill="#333"/><rect x="177" y="88" width="1" height="2" fill="#333"/><rect x="182" y="86" width="1" height="4" fill="#333"/><rect x="187" y="88" width="1" height="2" fill="#333"/><rect x="192" y="81" width="1" height="9" fill="#333"/><rect x="197" y="88" width="1" height="2" fill="#333"/><rect x="202" y="86" width="1" height="4" fill="#333"/><rect x="207" y="88" width="1" height="2" fill="#333"/><rect x="212" y="86" width="1" height="4" fill="#333"/><rect x="217" y="88" width="1" height="2" fill="#333"/><rect x="222" y="86" width="1" height="4" fill="#333"/><rect x="227" y="88" width="1" height="2" fill="#333"/><rect x="232" y="86" width="1" height="4" fill="#333"/><rect x="237" y="88" width="1" height="2" fill="#333"/><rect x="242" y="81" width="1" height="9" fill="#333"/><rect x="247" y="88" width="1" height="2" fill="#333"/><rect x="252" y="86" width="1" height="4" fill="#333"/><rect x="257" y="88" width="1" height="2" fill="#333"/><rect x="262" y="86" width="1" height="4" fill="#333"/><rect x="267" y="88" width="1" height="2" fill="#333"/><rect x="272" y="86" width="1" height="4" fill="#333"/><rect x="277" y="88" width="1" height="2" fill="#333"/><rect x="282" y="86" width="1" height="4" fill="#333"/><rect x="287" y="88" width="1" height="2" fill="#333"/><rect x="292" y="81" width="1" height="9" fill="#333"/><rect x="297" y="88" width="1" height="2" fill="#333"/><rect x="303" y="86" width="1" height="4" fill="#333"/><rect x="308" y="88" width="1" height="2" fill="#333"/><rect x="313" y="86" width="1" height="4" fill="#333"/><rect x="318" y="88" width="1" height="2" fill="#333"/><rect x="323" y="86" width="1" height="4" fill="#333"/><rect x="328" y="88" width="1" height="2" fill="#333"/><rect x="333" y="86" width="1" height="4" fill="#333"/><rect x="338" y="88" width="1" height="2" fill="#333"/><rect x="343" y="81" width="1" height="9" fill="#333"/><rect x="348" y="88" width="1" height="2" fill="#333"/><rect x="353" y="86" width="1" height="4" fill="#333"/><rect x="358" y="88" width="1" height="2" fill="#333"/><rect x="363" y="86" width="1" height="4" fill="#333"/><rect x="368" y="88" width="1" height="2" fill="#333"/><rect x="373" y="86" width="1" height="4" fill="#333"/><rect x="378" y="88" width="1" height="2" fill="#333"/><rect x="383" y="86" width="1" height="4" fill="#333"/><rect x="388" y="88" width="1" height="2" fill="#333"/><rect x="393" y="81" width="1" height="9" fill="#333"/><rect x="398" y="88" width="1" height="2" fill="#333"/><rect x="403" y="86" width="1" height="4" fill="#333"/><rect x="408" y="88" width="1" height="2" fill="#333"/><rect x="413" y="86" width="1" height="4" fill="#333"/><rect x="418" y="88" width="1" height="2" fill="#333"/><rect x="423" y="86" width="1" height="4" fill="#333"/><rect x="428" y="88" width="1" height="2" fill="#333"/><rect x="433" y="86" width="1" height="4" fill="#333"/><rect x="438" y="88" width="1" height="2" fill="#333"/><rect x="443" y="81" width="1" height="9" fill="#333"/><rect x="448" y="88" width="1" height="2" fill="#333"/><rect x="453" y="86" width="1" height="4" fill="#333"/><rect x="458" y="88" width="1" height="2" fill="#333"/><rect x="463" y="86" width="1" height="4" fill="#333"/><rect x="468" y="88" width="1" height="2" fill="#333"/><rect x="473" y="86" width="1" height="4" fill="#333"/><rect x="478" y="88" width="1" height="2" fill="#333"/><rect x="483" y="86" width="1" height="4" fill="#333"/><rect x="488" y="88" width="1" height="2" fill="#333"/><rect x="493" y="81" width="1" height="9" fill="#333"/><rect x="498" y="88" width="1" height="2" fill="#333"/><rect x="503" y="86" width="1" height="4" fill="#333"/><rect x="508" y="88" width="1" height="2" fill="#333"/><rect x="513" y="86" width="1" height="4" fill="#333"/><rect x="518" y="88" width="1" height="2" fill="#333"/><rect x="524" y="86" width="1" height="4" fill="#333"/><rect x="529" y="88" width="1" height="2" fill="#333"/><rect x="534" y="86" width="1" height="4" fill="#333"/><rect x="539" y="88" width="1" height="2" fill="#333"/><rect x="544" y="81" width="1" height="9" fill="#333"/><rect x="549" y="88" width="1" height="2" fill="#333"/><rect x="554" y="86" width="1" height="4" fill="#333"/><rect x="559" y="88" width="1" height="2" fill="#333"/><rect x="564" y="86" width="1" height="4" fill="#333"/><rect x="569" y="88" width="1" height="2" fill="#333"/><rect x="574" y="86" width="1" height="4" fill="#333"/><rect x="579" y="88" width="1" height="2" fill="#333"/><rect x="584" y="86" width="1" height="4" fill="#333"/><rect x="589" y="88" width="1" height="2" fill="#333"/><rect x="594" y="81" width="1" height="9" fill="#333"/><rect x="599" y="88" width="1" height="2" fill="#333"/><rect x="604" y="86" width="1" height="4" fill="#333"/><rect x="609" y="88" width="1" height="2" fill="#333"/><rect x="614" y="86" width="1" height="4" fill="#333"/><rect x="619" y="88" width="1" height="2" fill="#333"/><rect x="624" y="86" width="1" height="4" fill="#333"/><rect x="629" y="88" width="1" height="2" fill="#333"/><rect x="634" y="86" width="1" height="4" fill="#333"/><rect x="639" y="88" width="1" height="2" fill="#333"/><rect x="644" y="81" width="1" height="9" fill="#333"/><rect x="649" y="88" width="1" height="2" fill="#333"/><rect x="654" y="86" width="1" height="4" fill="#333"/><rect x="659" y="88" width="1" height="2" fill="#333"/><rect x="664" y="86" width="1" height="4" fill="#333"/><rect x="669" y="88" width="1" height="2" fill="#333"/><rect x="674" y="86" width="1" height="4" fill="#333"/><rect x="679" y="88" width="1" height="2" fill="#333"/><rect x="684" y="86" width="1" height="4" fill="#333"/><rect x="689" y="88" width="1" height="2" fill="#333"/><rect x="694" y="81" width="1" height="9" fill="#333"/><rect x="699" y="88" width="1" height="2" fill="#333"/><rect x="704" y="86" width="1" height="4" fill="#333"/><rect x="709" y="88" width="1" height="2" fill="#333"/><rect x="714" y="86" width="1" height="4" fill="#333"/><rect x="719" y="88" width="1" height="2" fill="#333"/><rect x="724" y="86" width="1" height="4" fill="#333"/><rect x="729" y="88" width="1" height="2" fill="#333"/><rect x="734" y="86" width="1" height="4" fill="#333"/><rect x="37" y="91" width="1" height="402" fill="#2a2a2a"/><rect x="35" y="92" width="2" height="1" fill="#333"/><rect x="28" y="97" width="9" height="1" fill="#333"/><rect x="35" y="102" width="2" height="1" fill="#333"/><rect x="33" y="107" width="4" height="1" fill="#333"/><rect x="35" y="112" width="2" height="1" fill="#333"/><rect x="33" y="117" width="4" height="1" fill="#333"/><rect x="35" y="122" width="2" height="1" fill="#333"/><rect x="33" y="127" width="4" height="1" fill="#333"/><rect x="35" y="132" width="2" height="1" fill="#333"/><rect x="33" y="137" width="4" height="1" fill="#333"/><rect x="35" y="142" width="2" height="1" fill="#333"/><rect x="28" y="147" width="9" height="1" fill="#333"/><rect x="35" y="152" width="2" height="1" fill="#333"/><rect x="33" y="157" width="4" height="1" fill="#333"/><rect x="35" y="162" width="2" height="1" fill="#333"/><rect x="33" y="167" width="4" height="1" fill="#333"/><rect x="35" y="172" width="2" height="1" fill="#333"/><rect x="33" y="177" width="4" height="1" fill="#333"/><rect x="35" y="182" width="2" height="1" fill="#333"/><rect x="33" y="187" width="4" height="1" fill="#333"/><rect x="35" y="192" width="2" height="1" fill="#333"/><rect x="28" y="197" width="9" height="1" fill="#333"/><rect x="35" y="202" width="2" height="1" fill="#333"/><rect x="33" y="207" width="4" height="1" fill="#333"/><rect x="35" y="212" width="2" height="1" fill="#333"/><rect x="33" y="217" width="4" height="1" fill="#333"/><rect x="35" y="222" width="2" height="1" fill="#333"/><rect x="33" y="227" width="4" height="1" fill="#333"/><rect x="35" y="232" width="2" height="1" fill="#333"/><rect x="33" y="237" width="4" height="1" fill="#333"/><rect x="35" y="242" width="2" height="1" fill="#333"/><rect x="28" y="247" width="9" height="1" fill="#333"/><rect x="35" y="253" width="2" height="1" fill="#333"/><rect x="33" y="258" width="4" height="1" fill="#333"/><rect x="35" y="263" width="2" height="1" fill="#333"/><rect x="33" y="268" width="4" height="1" fill="#333"/><rect x="35" y="273" width="2" height="1" fill="#333"/><rect x="33" y="278" width="4" height="1" fill="#333"/><rect x="35" y="283" width="2" height="1" fill="#333"/><rect x="33" y="288" width="4" height="1" fill="#333"/><rect x="35" y="293" width="2" height="1" fill="#333"/><rect x="28" y="298" width="9" height="1" fill="#333"/><rect x="35" y="303" width="2" height="1" fill="#333"/><rect x="33" y="308" width="4" height="1" fill="#333"/><rect x="35" y="313" width="2" height="1" fill="#333"/><rect x="33" y="318" width="4" height="1" fill="#333"/><rect x="35" y="323" width="2" height="1" fill="#333"/><rect x="33" y="328" width="4" height="1" fill="#333"/><rect x="35" y="333" width="2" height="1" fill="#333"/><rect x="33" y="338" width="4" height="1" fill="#333"/><rect x="35" y="343" width="2" height="1" fill="#333"/><rect x="28" y="348" width="9" height="1" fill="#333"/><rect x="35" y="353" width="2" height="1" fill="#333"/><rect x="33" y="358" width="4" height="1" fill="#333"/><rect x="35" y="363" width="2" height="1" fill="#333"/><rect x="33" y="368" width="4" height="1" fill="#333"/><rect x="35" y="373" width="2" height="1" fill="#333"/><rect x="33" y="378" width="4" height="1" fill="#333"/><rect x="35" y="383" width="2" height="1" fill="#333"/><rect x="33" y="388" width="4" height="1" fill="#333"/><rect x="35" y="393" width="2" height="1" fill="#333"/><rect x="28" y="398" width="9" height="1" fill="#333"/><rect x="35" y="403" width="2" height="1" fill="#333"/><rect x="33" y="408" width="4" height="1" fill="#333"/><rect x="35" y="413" width="2" height="1" fill="#333"/><rect x="33" y="418" width="4" height="1" fill="#333"/><rect x="35" y="423" width="2" height="1" fill="#333"/><rect x="33" y="428" width="4" height="1" fill="#333"/><rect x="35" y="433" width="2" height="1" fill="#333"/><rect x="33" y="438" width="4" height="1" fill="#333"/><rect x="35" y="443" width="2" height="1" fill="#333"/><rect x="28" y="448" width="9" height="1" fill="#333"/><rect x="35" y="453" width="2" height="1" fill="#333"/><rect x="33" y="458" width="4" height="1" fill="#333"/><rect x="35" y="463" width="2" height="1" fill="#333"/><rect x="33" y="469" width="4" height="1" fill="#333"/><rect x="35" y="474" width="2" height="1" fill="#333"/><rect x="33" y="479" width="4" height="1" fill="#333"/><rect x="35" y="484" width="2" height="1" fill="#333"/><rect x="33" y="489" width="4" height="1" fill="#333"/><path d="M575 86.5H581L578 90Z" fill="#000"/><path d="M33.5 262.5L37 265.2L33.5 268Z" fill="#000"/></svg>
<div class="t" style="left:42.81px;top:83.10px;font-size:6.5px;color:#4a5868;">-75</div>
<div class="t" style="left:93.04px;top:83.10px;font-size:6.5px;color:#4a5868;">-50</div>
<div class="t" style="left:143.27px;top:83.10px;font-size:6.5px;color:#4a5868;">-25</div>
<div class="t" style="left:193.50px;top:83.10px;font-size:6.5px;color:#4a5868;">0</div>
<div class="t" style="left:243.73px;top:83.10px;font-size:6.5px;color:#4a5868;">25</div>
<div class="t" style="left:293.96px;top:83.10px;font-size:6.5px;color:#4a5868;">50</div>
<div class="t" style="left:344.19px;top:83.10px;font-size:6.5px;color:#4a5868;">75</div>
<div class="t" style="left:394.42px;top:83.10px;font-size:6.5px;color:#4a5868;">100</div>
<div class="t" style="left:444.65px;top:83.10px;font-size:6.5px;color:#4a5868;">125</div>
<div class="t" style="left:494.88px;top:83.10px;font-size:6.5px;color:#4a5868;">150</div>
<div class="t" style="left:545.11px;top:83.10px;font-size:6.5px;color:#4a5868;">175</div>
<div class="t" style="left:595.34px;top:83.10px;font-size:6.5px;color:#4a5868;">200</div>
<div class="t" style="left:645.57px;top:83.10px;font-size:6.5px;color:#4a5868;">225</div>
<div class="t" style="left:695.80px;top:83.10px;font-size:6.5px;color:#4a5868;">250</div>
<div class="t" style="left:28.60px;top:98.55px;font-size:6.2px;color:#4a5868;">2</div>
<div class="t" style="left:28.60px;top:104.35px;font-size:6.2px;color:#4a5868;">7</div>
<div class="t" style="left:28.60px;top:110.15px;font-size:6.2px;color:#4a5868;">5</div>
<div class="t" style="left:28.60px;top:148.78px;font-size:6.2px;color:#4a5868;">2</div>
<div class="t" style="left:28.60px;top:154.58px;font-size:6.2px;color:#4a5868;">5</div>
<div class="t" style="left:28.60px;top:160.38px;font-size:6.2px;color:#4a5868;">0</div>
<div class="t" style="left:28.60px;top:199.01px;font-size:6.2px;color:#4a5868;">2</div>
<div class="t" style="left:28.60px;top:204.81px;font-size:6.2px;color:#4a5868;">2</div>
<div class="t" style="left:28.60px;top:210.61px;font-size:6.2px;color:#4a5868;">5</div>
<div class="t" style="left:28.60px;top:249.24px;font-size:6.2px;color:#4a5868;">2</div>
<div class="t" style="left:28.60px;top:255.04px;font-size:6.2px;color:#4a5868;">0</div>
<div class="t" style="left:28.60px;top:260.84px;font-size:6.2px;color:#4a5868;">0</div>
<div class="t" style="left:28.60px;top:299.47px;font-size:6.2px;color:#4a5868;">1</div>
<div class="t" style="left:28.60px;top:305.27px;font-size:6.2px;color:#4a5868;">7</div>
<div class="t" style="left:28.60px;top:311.07px;font-size:6.2px;color:#4a5868;">5</div>
<div class="t" style="left:28.60px;top:349.70px;font-size:6.2px;color:#4a5868;">1</div>
<div class="t" style="left:28.60px;top:355.50px;font-size:6.2px;color:#4a5868;">5</div>
<div class="t" style="left:28.60px;top:361.30px;font-size:6.2px;color:#4a5868;">0</div>
<div class="t" style="left:28.60px;top:399.93px;font-size:6.2px;color:#4a5868;">1</div>
<div class="t" style="left:28.60px;top:405.73px;font-size:6.2px;color:#4a5868;">2</div>
<div class="t" style="left:28.60px;top:411.53px;font-size:6.2px;color:#4a5868;">5</div>
<div class="t" style="left:28.60px;top:450.16px;font-size:6.2px;color:#4a5868;">1</div>
<div class="t" style="left:28.60px;top:455.96px;font-size:6.2px;color:#4a5868;">0</div>
<div class="t" style="left:28.60px;top:461.76px;font-size:6.2px;color:#4a5868;">0</div>
<svg class="a" style="left:28.5px;top:80.5px" width="7" height="7.5" viewBox="0 0 7 7.5"><path d="M1.5 3.5V2.5A2 2 0 0 1 5.5 2.5V3.5" stroke="#a07010" fill="none" stroke-width="1.1"/><rect x="0.5" y="3.3" width="6" height="4" fill="#f0b830" stroke="#a07010" stroke-width="0.6"/><rect x="3" y="4.5" width="1" height="2" fill="#803000"/></svg>
<div class="a" style="left:192px;top:91px;width:1px;height:402px;background:#9a9a9a"></div>
<div class="a" style="left:614px;top:91px;width:2px;height:402px;background:#585858"></div>
<div class="t" style="left:265.20px;top:186.59px;font-size:24.7px;color:#000;font-weight:bold;transform:scaleX(1.0212);">Inwepo Inwepo Inwepo</div>
<svg class="a" style="left:310.5px;top:234.5px" width="184" height="183" viewBox="0 0 184 183"><ellipse cx="92" cy="91.5" rx="91.5" ry="91" fill="#dd0000"/></svg>
<div class="a" style="left:505.5px;top:261px;width:130.5px;height:15.6px;background:rgba(225,240,250,0.35)"></div>
<div class="a" style="left:505.5px;top:261px;width:17px;height:15.6px;background:rgba(215,232,245,0.3)"></div>
<div class="a" style="left:512.5px;top:267.5px;width:3px;height:3px;background:#e8e0e0;border-radius:2px"></div>
<div class="t" style="left:530.00px;top:264.46px;font-size:9.5px;color:#e6e0e0;transform:scaleX(0.9379);">Window Snip</div>
<div class="a" style="left:614px;top:261px;width:2px;height:16px;background:#585858"></div>
<div class="a" style="left:740.9px;top:240px;width:10.9px;height:79.4px;background:#cdcdcd"></div>
<svg class="a" style="left:743px;top:95.5px" width="7" height="5" viewBox="0 0 7 5"><path d="M0.5 4L3.5 1L6.5 4" stroke="#555" fill="none" stroke-width="1.3"/></svg>
<svg class="a" style="left:743px;top:484.5px" width="7" height="5" viewBox="0 0 7 5"><path d="M0.5 1L3.5 4L6.5 1" stroke="#555" fill="none" stroke-width="1.3"/></svg>
<svg class="a" style="left:742.5px;top:81.5px" width="8" height="8" viewBox="0 0 8 8"><circle cx="3.2" cy="3.2" r="2.4" fill="none" stroke="#999" stroke-width="1"/><path d="M5 5L7.5 7.5" stroke="#999" stroke-width="1.3"/></svg>
<div class="a" style="left:208.2px;top:494.3px;width:347px;height:10.5px;background:#cdcdcd"></div>
<svg class="a" style="left:41.5px;top:496px" width="5" height="7" viewBox="0 0 5 7"><path d="M4 0.5L1 3.5L4 6.5" stroke="#555" fill="none" stroke-width="1.3"/></svg>
<svg class="a" style="left:731.5px;top:496px" width="5" height="7" viewBox="0 0 5 7"><path d="M1 0.5L4 3.5L1 6.5" stroke="#555" fill="none" stroke-width="1.3"/></svg>
<svg class="a" style="left:742.5px;top:495.5px" width="8" height="8" viewBox="0 0 8 8"><path d="M1 0.5L7 4L1 7.5Z" fill="#7aa870"/><path d="M1 4L7 4L1 7.5Z" fill="#6a80c0"/><path d="M4 4L7 4L5 7" fill="#d05050"/></svg>
<div class="a" style="left:757px;top:80px;width:1.2px;height:425px;background:#1e1e1e"></div>
<div class="a" style="left:757px;top:80px;width:243px;height:1.2px;background:#1e1e1e"></div>
<div class="a" style="left:758.5px;top:81.5px;width:241.5px;height:15.8px;background:#f7f7f7"></div>
<div class="a" style="left:758.5px;top:97px;width:241.5px;height:1px;background:#c8c8c8"></div>
<svg class="a" style="left:758.50px;top:83.50px" width="9.00" height="10.00" viewBox="0 0 16 16" preserveAspectRatio="none"><rect x="0" y="0" width="1.5" height="16" fill="#e07070"/><rect x="2.5" y="1" width="6" height="4" fill="#b4c8dc" stroke="#666" stroke-width="0.8"/><rect x="2.5" y="6" width="12.5" height="4" fill="#b4c8dc" stroke="#666" stroke-width="0.8"/><rect x="2.5" y="11" width="10" height="4" fill="#b4c8dc" stroke="#666" stroke-width="0.8"/></svg>
<div class="t" style="left:768.70px;top:83.74px;font-size:9.4px;color:#000;transform:scaleX(0.9717);">Align and Distribute (Shift+Ctrl+A)</div>
<div class="a" style="left:969.5px;top:83.5px;width:9.5px;height:9.5px;border:1px solid #9a9a9a;border-radius:2px;background:#f0f0f0"></div>
<svg class="a" style="left:971.5px;top:85.5px" width="6" height="6" viewBox="0 0 6 6"><path d="M4.5 0.8V5.2L1 3Z" fill="#666"/></svg>
<div class="a" style="left:986px;top:83.5px;width:9.5px;height:9.5px;border:1px solid #9a9a9a;border-radius:2px;background:#f0f0f0"></div>
<svg class="a" style="left:987.5px;top:85px" width="7" height="7" viewBox="0 0 7 7"><path d="M1 1L6 6M6 1L1 6" stroke="#555" stroke-width="1.6"/></svg>
<div class="t" style="left:766.00px;top:101.94px;font-size:9.4px;color:#000;font-weight:bold;transform:scaleX(0.8620);">Align</div>
<div class="t" style="left:860.20px;top:119.84px;font-size:9.4px;color:#000;transform:scaleX(0.9105);">Relative to:</div>
<div class="a" style="left:905.3px;top:115.5px;width:88.3px;height:17.3px;background:#fff;border:1px solid #adadad"></div>
<div class="a" style="left:980.5px;top:116.5px;width:12.1px;height:15.3px;background:#e1e1e1;border-left:1px solid #cfcfcf"></div>
<svg class="a" style="left:983px;top:122.5px" width="7" height="4" viewBox="0 0 7 4"><path d="M0.5 0.5L3.5 3.5L6.5 0.5" stroke="#555" fill="none"/></svg>
<div class="t" style="left:907.90px;top:120.24px;font-size:9.4px;color:#000;transform:scaleX(0.8724);">Page</div>
<div class="t" style="left:880.80px;top:136.84px;font-size:9.4px;color:#000;transform:scaleX(0.9219);">Treat selection as group:</div><div class="a" style="left:880.80px;top:146.00px;width:5.28px;height:1px;background:#808080"></div>
<div class="a" style="left:981px;top:137.6px;width:10px;height:9.4px;background:#fff;border:1px solid #333"></div>
<div class="t" style="left:765.90px;top:210.84px;font-size:9.4px;color:#000;font-weight:bold;transform:scaleX(0.9508);">Distribute</div>
<div class="t" style="left:765.90px;top:288.04px;font-size:9.4px;color:#000;font-weight:bold;transform:scaleX(0.9229);">Rearrange</div>
<div class="t" style="left:765.90px;top:339.94px;font-size:9.4px;color:#000;font-weight:bold;transform:scaleX(0.9196);">Remove overlaps</div>
<div class="t" style="left:853.30px;top:360.54px;font-size:9.4px;color:#000;transform:scaleX(0.8427);">H:</div><div class="a" style="left:853.30px;top:369.70px;width:5.71px;height:1px;background:#808080"></div>
<div class="a" style="left:864.3px;top:356.6px;width:36.5px;height:17.1px;background:#fff;border:1px solid #adadad"></div>
<div class="t" style="left:867.00px;top:360.54px;font-size:9.4px;color:#000;transform:scaleX(0.8824);">0.0</div>
<div class="a" style="left:901px;top:356.6px;width:8px;height:17.1px;background:#e8e8e8;border:1px solid #cfcfcf"></div>
<svg class="a" style="left:902.5px;top:359px" width="5" height="3" viewBox="0 0 5 3"><path d="M0 3L2.5 0L5 3Z" fill="#222"/></svg>
<svg class="a" style="left:902.5px;top:367.5px" width="5" height="3" viewBox="0 0 5 3"><path d="M0 0L2.5 3L5 0Z" fill="#222"/></svg>
<div class="t" style="left:911.90px;top:360.54px;font-size:9.4px;color:#000;transform:scaleX(0.8226);">V:</div><div class="a" style="left:911.90px;top:369.70px;width:5.14px;height:1px;background:#808080"></div>
<div class="a" style="left:921.2px;top:356.6px;width:37px;height:17.1px;background:#fff;border:1px solid #adadad"></div>
<div class="t" style="left:924.00px;top:360.54px;font-size:9.4px;color:#000;transform:scaleX(0.8824);">0.0</div>
<div class="a" style="left:958.5px;top:356.6px;width:8px;height:17.1px;background:#e8e8e8;border:1px solid #cfcfcf"></div>
<svg class="a" style="left:960px;top:359px" width="5" height="3" viewBox="0 0 5 3"><path d="M0 3L2.5 0L5 3Z" fill="#222"/></svg>
<svg class="a" style="left:960px;top:367.5px" width="5" height="3" viewBox="0 0 5 3"><path d="M0 0L2.5 3L5 0Z" fill="#222"/></svg>
<svg class="a" style="left:972.00px;top:356.50px" width="18.50" height="18.50" viewBox="0 0 16 16" preserveAspectRatio="none"><rect x="0" y="0" width="16" height="16" fill="#c8d4de"/><path d="M3 1V15M7 1V15M9 1V15M13 1V15" stroke="#98aab8" stroke-width="1.5"/><path d="M4 4H12M4 9H12" stroke="#b0c0cc" stroke-width="1"/></svg>
<div class="a" style="left:758.5px;top:385.5px;width:241.5px;height:7px;background:#f0f0f0"></div>
<div class="a" style="left:760px;top:394px;width:238.5px;height:14.300000000000011px;background:#cce4f7;border:1px solid #3d7ab8"></div>
<div class="t" style="left:773.80px;top:396.64px;font-size:9.4px;color:#000;transform:scaleX(0.9717);">Align and Distribute (Shift+Ctrl+A)</div>
<svg class="a" style="left:988px;top:398.5px" width="7" height="4" viewBox="0 0 7 4"><path d="M0 4L3.5 0L7 4Z" fill="#111"/></svg>
<svg class="a" style="left:762.00px;top:396.00px" width="9.00" height="10.00" viewBox="0 0 16 16" preserveAspectRatio="none"><rect x="0" y="0" width="1.5" height="16" fill="#d07070"/><rect x="2.5" y="1" width="6" height="4" fill="#c0c8d4" stroke="#777" stroke-width="0.8"/><rect x="2.5" y="6" width="12.5" height="4" fill="#c0c8d4" stroke="#777" stroke-width="0.8"/><rect x="2.5" y="11" width="10" height="4" fill="#c0c8d4" stroke="#777" stroke-width="0.8"/></svg>
<div class="a" style="left:760px;top:411px;width:238.5px;height:14.300000000000011px;background:#e1e1e1;border:1px solid #c2c2c2"></div>
<div class="t" style="left:773.80px;top:413.64px;font-size:9.4px;color:#000;transform:scaleX(0.9380);">Export PNG Image (Shift+Ctrl+E)</div>
<svg class="a" style="left:988px;top:415.5px" width="7" height="4" viewBox="0 0 7 4"><path d="M0 4L3.5 0L7 4Z" fill="#777"/></svg>
<svg class="a" style="left:762.00px;top:413.00px" width="9.00" height="10.50" viewBox="0 0 16 16" preserveAspectRatio="none"><path d="M0.5 0.5H8L11.5 4V15.5H0.5Z" fill="#fafafa" stroke="#555"/><path d="M6 8H15" stroke="#000" stroke-width="1.2"/><path d="M12.5 5.5L15.5 8L12.5 10.5Z" fill="#000"/></svg>
<div class="a" style="left:760px;top:428.1px;width:238.5px;height:14.199999999999989px;background:#e1e1e1;border:1px solid #c2c2c2"></div>
<div class="t" style="left:773.80px;top:430.74px;font-size:9.4px;color:#000;transform:scaleX(0.9412);">Fill and Stroke (Shift+Ctrl+F)</div>
<svg class="a" style="left:988px;top:432.6px" width="7" height="4" viewBox="0 0 7 4"><path d="M0 4L3.5 0L7 4Z" fill="#777"/></svg>
<svg class="a" style="left:762.00px;top:430.00px" width="9.00" height="10.50" viewBox="0 0 16 16" preserveAspectRatio="none"><path d="M0.8 0.8H14L2.5 13.5L0.8 15.2Z" fill="#fff" stroke="#111" stroke-width="1.1"/><path d="M1.5 15L13 3.5L15.5 5L5 14.5Z" fill="#111"/><path d="M13 3.5L15.5 1.2L15.8 5Z" fill="#f0c000"/></svg>
<div class="a" style="left:760px;top:445.5px;width:238.5px;height:14.100000000000023px;background:#e1e1e1;border:1px solid #c2c2c2"></div>
<div class="t" style="left:773.80px;top:448.14px;font-size:9.4px;color:#000;transform:scaleX(0.9365);">Layers (Shift+Ctrl+L)</div>
<svg class="a" style="left:988px;top:450.0px" width="7" height="4" viewBox="0 0 7 4"><path d="M0 4L3.5 0L7 4Z" fill="#777"/></svg>
<svg class="a" style="left:762.00px;top:447.50px" width="9.00" height="9.50" viewBox="0 0 16 16" preserveAspectRatio="none"><path d="M1 3.5L4 1H15V4L12 6.5H1Z" fill="#eee" stroke="#555" stroke-width="0.9"/><path d="M1 6.5H12L15 4V7.5L12 10H1Z" fill="#ddd" stroke="#555" stroke-width="0.9"/><path d="M1 10H12L15 7.5V11L12 13.5H1Z" fill="#ccc" stroke="#555" stroke-width="0.9"/></svg>
<svg width="0" height="0" style="position:absolute"><defs><linearGradient id="gb" x1="0" y1="0" x2="0" y2="1"><stop offset="0" stop-color="#dcebf7"/><stop offset="1" stop-color="#a9c6de"/></linearGradient></defs></svg>
<svg class="a" style="left:845.00px;top:155.00px" width="18" height="18" viewBox="0 0 18 18"><rect x="0.5" y="4" width="12.3" height="5.5" rx="0.2" fill="url(#gb)" stroke="#262626" stroke-width="0.9"/><rect x="7.5" y="7" width="5.3" height="3.8" rx="0.2" fill="url(#gb)" stroke="#262626" stroke-width="0.9"/><rect x="3.5" y="12.8" width="9.3" height="4.4" rx="0.2" fill="url(#gb)" stroke="#262626" stroke-width="0.9"/><path d="M12.8 0 L12.8 18" stroke="#e02828" stroke-width="0.9"/><rect x="14.3" y="0.5" width="3" height="3" fill="#f4d030" stroke="#333" stroke-width="0.7"/></svg>
<svg class="a" style="left:869.70px;top:155.00px" width="18" height="18" viewBox="0 0 18 18"><rect x="1.2" y="0.8" width="16.2" height="5.2" rx="0.2" fill="url(#gb)" stroke="#262626" stroke-width="0.9"/><rect x="1.2" y="3.5" width="4" height="3.2" rx="0.2" fill="url(#gb)" stroke="#262626" stroke-width="0.9"/><rect x="1.2" y="8.2" width="9.2" height="4.4" rx="0.2" fill="url(#gb)" stroke="#262626" stroke-width="0.9"/><path d="M0.6 0 L0.6 18" stroke="#e02828" stroke-width="0.9"/><path d="M11 16.3 L3.70 16.30" stroke="#111" stroke-width="0.8"/><path d="M1.5 16.3 L3.70 15.00 L3.70 17.60 Z" fill="#111"/></svg>
<svg class="a" style="left:895.50px;top:155.00px" width="18" height="18" viewBox="0 0 18 18"><rect x="0.5" y="0.8" width="16.5" height="5" rx="0.2" fill="url(#gb)" stroke="#262626" stroke-width="0.9"/><rect x="6" y="4" width="5.5" height="3.3" rx="0.2" fill="url(#gb)" stroke="#262626" stroke-width="0.9"/><rect x="3.5" y="8" width="10" height="4.4" rx="0.2" fill="url(#gb)" stroke="#262626" stroke-width="0.9"/><path d="M9 0 L9 18" stroke="#e02828" stroke-width="0.9"/><path d="M1 16.3 L5.80 16.30" stroke="#111" stroke-width="0.8"/><path d="M8 16.3 L5.80 17.60 L5.80 15.00 Z" fill="#111"/><path d="M17 16.3 L12.20 16.30" stroke="#111" stroke-width="0.8"/><path d="M10 16.3 L12.20 15.00 L12.20 17.60 Z" fill="#111"/></svg>
<svg class="a" style="left:922.00px;top:155.00px" width="18" height="18" viewBox="0 0 18 18"><rect x="0.8" y="0.8" width="16" height="5.2" rx="0.2" fill="url(#gb)" stroke="#262626" stroke-width="0.9"/><rect x="12" y="3.5" width="4.8" height="3.2" rx="0.2" fill="url(#gb)" stroke="#262626" stroke-width="0.9"/><rect x="7.5" y="8.2" width="9.3" height="4.4" rx="0.2" fill="url(#gb)" stroke="#262626" stroke-width="0.9"/><path d="M17.3 0 L17.3 18" stroke="#e02828" stroke-width="0.9"/><path d="M6 16.3 L14.30 16.30" stroke="#111" stroke-width="0.8"/><path d="M16.5 16.3 L14.30 17.60 L14.30 15.00 Z" fill="#111"/></svg>
<svg class="a" style="left:947.00px;top:155.00px" width="18" height="18" viewBox="0 0 18 18"><rect x="5.3" y="4.3" width="12.3" height="5.5" rx="0.2" fill="url(#gb)" stroke="#262626" stroke-width="0.9"/><rect x="5.3" y="7" width="5" height="3.8" rx="0.2" fill="url(#gb)" stroke="#262626" stroke-width="0.9"/><rect x="5.3" y="12.8" width="9.3" height="4.4" rx="0.2" fill="url(#gb)" stroke="#262626" stroke-width="0.9"/><path d="M5.2 0 L5.2 18" stroke="#e02828" stroke-width="0.9"/><rect x="0.5" y="0.5" width="3" height="3" fill="#f4d030" stroke="#333" stroke-width="0.7"/></svg>
<svg class="a" style="left:972.50px;top:155.00px" width="18" height="18" viewBox="0 0 18 18"><path d="M3.5 0 L3.5 17" stroke="#e02828" stroke-width="0.9"/><text x="3.5" y="7.5" font-family="Liberation Serif" font-weight="bold" font-size="10" fill="#2a3a58">a</text><text x="0.5" y="16" font-family="Liberation Serif" font-weight="bold" font-size="13" fill="#111" font-style="italic">y</text></svg>
<svg class="a" style="left:845.00px;top:180.00px" width="18" height="18" viewBox="0 0 18 18"><rect x="0.5" y="4" width="3.4" height="9.5" rx="0.2" fill="url(#gb)" stroke="#262626" stroke-width="0.9"/><rect x="5.5" y="8.8" width="3.8" height="4.7" rx="0.2" fill="url(#gb)" stroke="#262626" stroke-width="0.9"/><rect x="8" y="0.5" width="4.5" height="13" rx="0.2" fill="url(#gb)" stroke="#262626" stroke-width="0.9"/><path d="M0 13.5 L18 13.5" stroke="#e02828" stroke-width="0.9"/><rect x="14.5" y="14.5" width="3" height="3" fill="#f4d030" stroke="#333" stroke-width="0.7"/></svg>
<svg class="a" style="left:869.70px;top:180.00px" width="18" height="18" viewBox="0 0 18 18"><rect x="4" y="1" width="4" height="9" rx="0.2" fill="url(#gb)" stroke="#262626" stroke-width="0.9"/><rect x="8.5" y="1" width="6" height="17" rx="0.2" fill="url(#gb)" stroke="#262626" stroke-width="0.9"/><rect x="8.5" y="1" width="3" height="3.2" rx="0.2" fill="url(#gb)" stroke="#262626" stroke-width="0.9"/><path d="M0 0.6 L18 0.6" stroke="#e02828" stroke-width="0.9" stroke-dasharray="1 0.6"/><path d="M2 13 L2.00 3.70" stroke="#111" stroke-width="0.8"/><path d="M2 1.5 L3.30 3.70 L0.70 3.70 Z" fill="#111"/></svg>
<svg class="a" style="left:895.50px;top:180.00px" width="18" height="18" viewBox="0 0 18 18"><rect x="4" y="4" width="4.2" height="10" rx="0.2" fill="url(#gb)" stroke="#262626" stroke-width="0.9"/><rect x="10" y="0.5" width="5" height="17" rx="0.2" fill="url(#gb)" stroke="#262626" stroke-width="0.9"/><rect x="8.5" y="6.5" width="3" height="4.5" rx="0.2" fill="url(#gb)" stroke="#262626" stroke-width="0.9"/><path d="M0 9.2 L18 9.2" stroke="#e02828" stroke-width="0.9"/><path d="M1.5 1 L1.50 5.80" stroke="#111" stroke-width="0.8"/><path d="M1.5 8 L0.20 5.80 L2.80 5.80 Z" fill="#111"/><path d="M1.5 17.5 L1.50 12.70" stroke="#111" stroke-width="0.8"/><path d="M1.5 10.5 L2.80 12.70 L0.20 12.70 Z" fill="#111"/></svg>
<svg class="a" style="left:922.00px;top:180.00px" width="18" height="18" viewBox="0 0 18 18"><rect x="4" y="8.5" width="4" height="9" rx="0.2" fill="url(#gb)" stroke="#262626" stroke-width="0.9"/><rect x="9" y="1" width="4.5" height="16.5" rx="0.2" fill="url(#gb)" stroke="#262626" stroke-width="0.9"/><rect x="12" y="12" width="3" height="5" rx="0.2" fill="url(#gb)" stroke="#262626" stroke-width="0.9"/><path d="M0 17.5 L18 17.5" stroke="#e02828" stroke-width="0.9"/><path d="M2 5.5 L2.00 14.30" stroke="#111" stroke-width="0.8"/><path d="M2 16.5 L0.70 14.30 L3.30 14.30 Z" fill="#111"/></svg>
<svg class="a" style="left:947.00px;top:180.00px" width="18" height="18" viewBox="0 0 18 18"><rect x="0.5" y="4.2" width="3.8" height="9" rx="0.2" fill="url(#gb)" stroke="#262626" stroke-width="0.9"/><rect x="5" y="4.2" width="3.8" height="5" rx="0.2" fill="url(#gb)" stroke="#262626" stroke-width="0.9"/><rect x="7.5" y="4.2" width="4.5" height="13.3" rx="0.2" fill="url(#gb)" stroke="#262626" stroke-width="0.9"/><path d="M0 4.2 L17 4.2" stroke="#e02828" stroke-width="0.9"/><rect x="14.5" y="0.5" width="3" height="3" fill="#f4d030" stroke="#333" stroke-width="0.7"/></svg>
<svg class="a" style="left:972.50px;top:180.00px" width="18" height="18" viewBox="0 0 18 18"><path d="M0 12.5 L18 12.5" stroke="#e02828" stroke-width="0.9"/><text x="-0.5" y="13.5" font-family="Liberation Serif" font-weight="bold" font-size="13" fill="#111" font-style="italic">y</text><text x="9" y="12.5" font-family="Liberation Serif" font-weight="bold" font-size="10" fill="#2a3a58">a</text></svg>
<svg class="a" style="left:870.30px;top:227.50px" width="18" height="18" viewBox="0 0 18 18"><path d="M1 0.8H17" stroke="#222" stroke-width="0.8" stroke-dasharray="1 0.5"/><rect x="0.8" y="4.5" width="3.3" height="13" rx="0.2" fill="url(#gb)" stroke="#262626" stroke-width="0.9"/><rect x="6.5" y="5.5" width="2.5" height="7" rx="0.2" fill="url(#gb)" stroke="#262626" stroke-width="0.9"/><rect x="13" y="5" width="3.5" height="6.5" rx="0.2" fill="url(#gb)" stroke="#262626" stroke-width="0.9"/><path d="M1 0 L1 9" stroke="#e02828" stroke-width="0.9"/><path d="M7.5 0 L7.5 9" stroke="#e02828" stroke-width="0.9"/><path d="M14.5 0 L14.5 9" stroke="#e02828" stroke-width="0.9"/></svg>
<svg class="a" style="left:895.60px;top:227.50px" width="18" height="18" viewBox="0 0 18 18"><path d="M1 0.8H17" stroke="#222" stroke-width="0.8" stroke-dasharray="1 0.5"/><rect x="0.8" y="5" width="4" height="6.5" rx="0.2" fill="url(#gb)" stroke="#262626" stroke-width="0.9"/><rect x="7" y="4.5" width="4" height="13" rx="0.2" fill="url(#gb)" stroke="#262626" stroke-width="0.9"/><rect x="13.5" y="6" width="3.2" height="10" rx="0.2" fill="url(#gb)" stroke="#262626" stroke-width="0.9"/><path d="M2.5 0 L2.5 9" stroke="#e02828" stroke-width="0.9"/><path d="M9 0 L9 9" stroke="#e02828" stroke-width="0.9"/><path d="M15.5 0 L15.5 9" stroke="#e02828" stroke-width="0.9"/></svg>
<svg class="a" style="left:921.00px;top:227.50px" width="18" height="18" viewBox="0 0 18 18"><path d="M1 0.8H17" stroke="#222" stroke-width="0.8" stroke-dasharray="1 0.5"/><rect x="0.8" y="4.5" width="4" height="13" rx="0.2" fill="url(#gb)" stroke="#262626" stroke-width="0.9"/><rect x="8.5" y="5.5" width="3" height="7" rx="0.2" fill="url(#gb)" stroke="#262626" stroke-width="0.9"/><rect x="13" y="5" width="3.5" height="6.5" rx="0.2" fill="url(#gb)" stroke="#262626" stroke-width="0.9"/><path d="M4.5 0 L4.5 9" stroke="#e02828" stroke-width="0.9"/><path d="M11.5 0 L11.5 9" stroke="#e02828" stroke-width="0.9"/><path d="M17 0 L17 9" stroke="#e02828" stroke-width="0.9"/></svg>
<svg class="a" style="left:947.00px;top:227.50px" width="18" height="18" viewBox="0 0 18 18"><path d="M1 0.8H17" stroke="#222" stroke-width="0.8" stroke-dasharray="1 0.5"/><rect x="0.8" y="4.5" width="2.5" height="11.5" rx="0.2" fill="url(#gb)" stroke="#262626" stroke-width="0.9"/><rect x="7" y="5.5" width="2.5" height="7" rx="0.2" fill="url(#gb)" stroke="#262626" stroke-width="0.9"/><rect x="14" y="4.5" width="2.5" height="13" rx="0.2" fill="url(#gb)" stroke="#262626" stroke-width="0.9"/><path d="M1.5 0 L1.5 5" stroke="#e02828" stroke-width="0.9"/><path d="M3.5 0 L3.5 5" stroke="#e02828" stroke-width="0.9"/><path d="M7 0 L7 5" stroke="#e02828" stroke-width="0.9"/><path d="M9.5 0 L9.5 5" stroke="#e02828" stroke-width="0.9"/><path d="M14 0 L14 5" stroke="#e02828" stroke-width="0.9"/><path d="M16.5 0 L16.5 5" stroke="#e02828" stroke-width="0.9"/></svg>
<svg class="a" style="left:972.20px;top:227.50px" width="18" height="18" viewBox="0 0 18 18"><path d="M1 0 L1 18" stroke="#e02828" stroke-width="0.9"/><path d="M12.5 0 L12.5 18" stroke="#e02828" stroke-width="0.9"/><path d="M6 1.5 L9.80 1.50" stroke="#111" stroke-width="0.8"/><path d="M12 1.5 L9.80 2.80 L9.80 0.20 Z" fill="#111"/><path d="M7 1.5 L3.70 1.50" stroke="#111" stroke-width="0.8"/><path d="M1.5 1.5 L3.70 0.20 L3.70 2.80 Z" fill="#111"/><text x="1.5" y="13" font-family="Liberation Serif" font-weight="bold" font-size="10.5" fill="#2a3a58">a</text><text x="8" y="14" font-family="Liberation Serif" font-weight="bold" font-size="13" fill="#111" font-style="italic">y</text></svg>
<svg class="a" style="left:870.30px;top:252.80px" width="18" height="18" viewBox="0 0 18 18"><rect x="5" y="1" width="5.5" height="3.5" rx="0.2" fill="url(#gb)" stroke="#262626" stroke-width="0.9"/><rect x="6" y="7" width="6.5" height="2.2" rx="0.2" fill="url(#gb)" stroke="#262626" stroke-width="0.9"/><rect x="5" y="13.5" width="12.5" height="3.5" rx="0.2" fill="url(#gb)" stroke="#262626" stroke-width="0.9"/><path d="M0 0.8 L5 0.8" stroke="#e02828" stroke-width="0.9"/><path d="M0 7.5 L6 7.5" stroke="#e02828" stroke-width="0.9"/><path d="M0 13.5 L5 13.5" stroke="#e02828" stroke-width="0.9"/><path d="M1 4 L1.00 3.70" stroke="#111" stroke-width="0.8"/><path d="M1 1.5 L2.30 3.70 L-0.30 3.70 Z" fill="#111"/><path d="M1 4 L1.00 4.80" stroke="#111" stroke-width="0.8"/><path d="M1 7 L-0.30 4.80 L2.30 4.80 Z" fill="#111"/><path d="M1 10 L1.00 10.00" stroke="#111" stroke-width="0.8"/><path d="M1 7.8 L2.30 10.00 L-0.30 10.00 Z" fill="#111"/><path d="M1 10 L1.00 10.80" stroke="#111" stroke-width="0.8"/><path d="M1 13 L-0.30 10.80 L2.30 10.80 Z" fill="#111"/></svg>
<svg class="a" style="left:895.60px;top:252.80px" width="18" height="18" viewBox="0 0 18 18"><rect x="7" y="0.5" width="9" height="3" rx="0.2" fill="url(#gb)" stroke="#262626" stroke-width="0.9"/><rect x="5.5" y="5.5" width="12" height="4.5" rx="0.2" fill="url(#gb)" stroke="#262626" stroke-width="0.9"/><rect x="6.5" y="12.5" width="6" height="4.5" rx="0.2" fill="url(#gb)" stroke="#262626" stroke-width="0.9"/><path d="M0.5 2 L8 2" stroke="#e02828" stroke-width="0.9"/><path d="M0.5 7.8 L8 7.8" stroke="#e02828" stroke-width="0.9"/><path d="M0.5 14.5 L8 14.5" stroke="#e02828" stroke-width="0.9"/><path d="M1 2V14.5" stroke="#222" stroke-width="0.8"/></svg>
<svg class="a" style="left:921.00px;top:252.80px" width="18" height="18" viewBox="0 0 18 18"><rect x="5.5" y="0.5" width="5.5" height="3.5" rx="0.2" fill="url(#gb)" stroke="#262626" stroke-width="0.9"/><rect x="6" y="7" width="6.5" height="3" rx="0.2" fill="url(#gb)" stroke="#262626" stroke-width="0.9"/><rect x="5" y="12.5" width="12.5" height="4" rx="0.2" fill="url(#gb)" stroke="#262626" stroke-width="0.9"/><path d="M0 4.5 L6 4.5" stroke="#e02828" stroke-width="0.9"/><path d="M0 10 L6 10" stroke="#e02828" stroke-width="0.9"/><path d="M0 17 L6 17" stroke="#e02828" stroke-width="0.9"/><path d="M1 4.5V17" stroke="#222" stroke-width="0.8"/></svg>
<svg class="a" style="left:947.00px;top:252.80px" width="18" height="18" viewBox="0 0 18 18"><rect x="4.5" y="0.8" width="13" height="2.5" rx="0.2" fill="url(#gb)" stroke="#262626" stroke-width="0.9"/><rect x="5" y="7" width="8" height="2.5" rx="0.2" fill="url(#gb)" stroke="#262626" stroke-width="0.9"/><rect x="4.5" y="13.5" width="11" height="2.5" rx="0.2" fill="url(#gb)" stroke="#262626" stroke-width="0.9"/><path d="M0 2 L5 2" stroke="#e02828" stroke-width="0.9"/><path d="M0 8 L5 8" stroke="#e02828" stroke-width="0.9"/><path d="M0 14.5 L5 14.5" stroke="#e02828" stroke-width="0.9"/><path d="M1 2V14.5" stroke="#222" stroke-width="0.8" stroke-dasharray="1.5 1"/></svg>
<svg class="a" style="left:972.20px;top:252.80px" width="18" height="18" viewBox="0 0 18 18"><path d="M0 6.5 L18 6.5" stroke="#e02828" stroke-width="0.9"/><path d="M0 17.5 L18 17.5" stroke="#e02828" stroke-width="0.9"/><path d="M2.5 12 L2.50 9.70" stroke="#111" stroke-width="0.8"/><path d="M2.5 7.5 L3.80 9.70 L1.20 9.70 Z" fill="#111"/><path d="M2.5 12 L2.50 14.30" stroke="#111" stroke-width="0.8"/><path d="M2.5 16.5 L1.20 14.30 L3.80 14.30 Z" fill="#111"/><text x="6" y="8" font-family="Liberation Serif" font-weight="bold" font-size="12" fill="#111" font-style="italic">y</text><text x="8" y="17" font-family="Liberation Serif" font-weight="bold" font-size="10.5" fill="#2a3a58">a</text></svg>
<svg class="a" style="left:844.40px;top:304.60px" width="18" height="18" viewBox="0 0 18 18"><g stroke="#8ab0d8" stroke-width="0.9" fill="none"><path d="M2 8L5 4L9 6L8.5 10.5L4 11.5Z"/><path d="M9 6L13 6.5L16 3M13 6.5L16 11"/></g><g fill="#9cc0e4"><circle cx="2" cy="8" r="1"/><circle cx="5" cy="4" r="1"/><circle cx="9" cy="6" r="1"/><circle cx="8.5" cy="10.5" r="1"/><circle cx="4" cy="11.5" r="1"/><circle cx="16" cy="3" r="1"/><circle cx="16" cy="11" r="1"/></g></svg>
<svg class="a" style="left:870.20px;top:304.60px" width="18" height="18" viewBox="0 0 18 18"><rect x="1" y="1" width="7" height="7" fill="url(#gb)" stroke="#333" stroke-width="0.8"/><rect x="10" y="9.5" width="7.5" height="7.5" fill="url(#gb)" stroke="#333" stroke-width="0.8"/><path d="M8 4C12 4 13.5 5 13.5 9M4.5 8C4.5 13 6 13.5 10 13.5" stroke="#111" fill="none" stroke-width="0.9"/><path d="M12 7.5H15L13.5 9.5Z" fill="#111"/><path d="M3 9.5H6L4.5 7.5Z" fill="#111"/></svg>
<svg class="a" style="left:896.00px;top:304.60px" width="18" height="18" viewBox="0 0 18 18"><rect x="1" y="1" width="7" height="7" fill="url(#gb)" stroke="#333" stroke-width="0.8"/><rect x="10" y="5" width="7.5" height="7.5" fill="url(#gb)" stroke="#333" stroke-width="0.8"/><path d="M8 3.5C12 3.5 13 3.5 13 5" stroke="#111" fill="none" stroke-width="0.9"/><path d="M4 8V14" stroke="#111" stroke-width="0.8"/><path d="M2 12H9M2 14H9M2 16H9" stroke="#c02020" stroke-width="1.1"/></svg>
<svg class="a" style="left:921.70px;top:304.60px" width="18" height="18" viewBox="0 0 18 18"><rect x="1" y="1" width="7" height="7" fill="url(#gb)" stroke="#333" stroke-width="0.8"/><rect x="10" y="5" width="7.5" height="7.5" fill="url(#gb)" stroke="#333" stroke-width="0.8"/><path d="M8 3.5C12 3.5 13 3.5 13 5" stroke="#111" fill="none" stroke-width="0.9"/><circle cx="5.5" cy="13" r="3.3" fill="none" stroke="#e03030" stroke-width="0.9" stroke-dasharray="1.2 0.8"/><path d="M5 8.5L7 10.5L4.5 11" fill="#e03030"/></svg>
<svg class="a" style="left:946.30px;top:304.60px" width="18" height="18" viewBox="0 0 18 18"><rect x="1" y="3" width="3.5" height="2.8" fill="#f0c840" stroke="#555" stroke-width="0.6"/><rect x="9" y="1" width="3.5" height="2.8" fill="#f0c840" stroke="#555" stroke-width="0.6"/><rect x="12.5" y="5" width="3.5" height="2.8" fill="#f0c840" stroke="#555" stroke-width="0.6"/><rect x="8" y="8" width="3.5" height="2.8" fill="#f0c840" stroke="#555" stroke-width="0.6"/><rect x="1" y="13.5" width="3.5" height="2.8" fill="#f0c840" stroke="#555" stroke-width="0.6"/><rect x="9" y="12.5" width="3.5" height="2.8" fill="#f0c840" stroke="#555" stroke-width="0.6"/></svg>
<svg class="a" style="left:972.00px;top:304.60px" width="18" height="18" viewBox="0 0 18 18"><path d="M6 8L15 3M6 8L15 14M15 3V14" stroke="#e03030" stroke-width="0.9"/><rect x="0.5" y="5.5" width="6" height="5" fill="#f4d040" stroke="#333" stroke-width="0.8"/><rect x="13.3" y="1" width="3.5" height="4" fill="#f4d040" stroke="#333" stroke-width="0.8"/><rect x="13.3" y="12.5" width="3.5" height="3.5" fill="#f4d040" stroke="#333" stroke-width="0.8"/></svg>
<div class="a" style="left:1003px;top:80.7px;width:19.8px;height:19.0px;background:#cce8ff;border:1px solid #b8dcf8"></div>
<svg class="a" style="left:1005.50px;top:83.50px" width="14" height="14" viewBox="0 0 14 14"><path d="M3.5 3.5L9.5 9.5" stroke="#222" stroke-width="1"/><path d="M7 10L10 10L10 7Z" fill="#111"/><circle cx="2.8" cy="2.8" r="1.9" fill="#7080f8" stroke="#2a3ad0" stroke-width="0.8"/><path d="M11.3 9.3L13.3 11.3L11.3 13.3L9.3 11.3Z" fill="#c8f0c8" stroke="#30a040" stroke-width="0.9"/></svg>
<div class="a" style="left:1006px;top:104.5px;width:13.5px;height:1px;background:#c8c8c8"></div>
<svg class="a" style="left:1005.50px;top:112.00px" width="14" height="14" viewBox="0 0 14 14"><path d="M3.5 3.5L9.5 9.5" stroke="#222" stroke-width="1"/><path d="M7 10L10 10L10 7Z" fill="#111"/><circle cx="2.8" cy="2.8" r="1.9" fill="#7080f8" stroke="#2a3ad0" stroke-width="0.8"/><path d="M11.3 9.3L13.3 11.3L11.3 13.3L9.3 11.3Z" fill="#c8f0c8" stroke="#30a040" stroke-width="0.9"/></svg>
<svg class="a" style="left:1005.50px;top:130.50px" width="14" height="14" viewBox="0 0 14 14"><path d="M2 11.5H11.5V2" stroke="#666" stroke-width="0.9" stroke-dasharray="1 1" fill="none"/></svg>
<svg class="a" style="left:1005.50px;top:150.50px" width="14" height="14" viewBox="0 0 14 14"><path d="M2 11.5H11.5V2" stroke="#666" stroke-width="0.9" stroke-dasharray="1 1" fill="none"/><path d="M11.5 9.5L13 11L11.5 12.5L10 11Z" fill="#888" stroke="#555" stroke-width="0.5"/></svg>
<svg class="a" style="left:1005.50px;top:169.50px" width="14" height="14" viewBox="0 0 14 14"><path d="M2 11.5H11.5V5" stroke="#666" stroke-width="0.9" stroke-dasharray="1 1" fill="none"/><ellipse cx="11.5" cy="3.5" rx="1.3" ry="2" fill="#999" stroke="#555" stroke-width="0.5"/></svg>
<svg class="a" style="left:1005.50px;top:188.50px" width="14" height="14" viewBox="0 0 14 14"><path d="M2 11.5H11.5V4" stroke="#555" stroke-width="0.9" stroke-dasharray="1 1" fill="none"/><circle cx="4.5" cy="5" r="1.3" fill="#aaa" stroke="#555" stroke-width="0.5"/></svg>
<div class="a" style="left:1006px;top:210.5px;width:13.5px;height:1px;background:#c8c8c8"></div>
<div class="a" style="left:1003px;top:216.1px;width:19.8px;height:18.099999999999994px;background:#cce8ff;border:1px solid #b8dcf8"></div>
<svg class="a" style="left:1005.50px;top:218.50px" width="14" height="14" viewBox="0 0 14 14"><path d="M3.5 3.5L9.5 9.5" stroke="#222" stroke-width="1"/><path d="M7 10L10 10L10 7Z" fill="#111"/><circle cx="2.8" cy="2.8" r="1.9" fill="#7080f8" stroke="#2a3ad0" stroke-width="0.8"/><path d="M11.3 9.3L13.3 11.3L11.3 13.3L9.3 11.3Z" fill="#c8f0c8" stroke="#30a040" stroke-width="0.9"/></svg>
<svg class="a" style="left:1005.50px;top:238.00px" width="14" height="14" viewBox="0 0 14 14"><path d="M1.5 3C5 2 9 4 10 9L9 12M10 9L12.5 7" stroke="#2a9a3a" stroke-width="1.5" fill="none"/></svg>
<svg class="a" style="left:1005.50px;top:257.00px" width="14" height="14" viewBox="0 0 14 14"><path d="M1 12L13 2M1 9L13 10" stroke="#444" stroke-width="0.9"/><circle cx="7" cy="7.2" r="1.6" fill="#40b050" stroke="#206030" stroke-width="0.6"/></svg>
<div class="a" style="left:1003px;top:274px;width:19.8px;height:19px;background:#cce8ff;border:1px solid #b8dcf8"></div>
<svg class="a" style="left:1005.50px;top:276.50px" width="14" height="14" viewBox="0 0 14 14"><path d="M1.5 2C6 1.5 9.5 4 10 8.5" stroke="#555" stroke-width="1.1" fill="none"/><circle cx="9.5" cy="10" r="1.8" fill="#90d890" stroke="#2a8a3a" stroke-width="0.8"/></svg>
<svg class="a" style="left:1005.50px;top:296.50px" width="14" height="14" viewBox="0 0 14 14"><path d="M2 2H6C8 2 9 5 9 8L7.5 11M9 8L11.5 9" stroke="#555" stroke-width="1" fill="none"/><rect x="3" y="1" width="3" height="3" fill="#60c060" stroke="#207030" stroke-width="0.6"/></svg>
<svg class="a" style="left:1005.50px;top:316.00px" width="14" height="14" viewBox="0 0 14 14"><path d="M1.5 12.5L12.5 1.5" stroke="#e03030" stroke-width="1.2" stroke-dasharray="2 1"/><circle cx="7" cy="7" r="1.6" fill="#40b050" stroke="#206030" stroke-width="0.6"/><path d="M4 7L6 11M8 3L10 6" stroke="#c02020" stroke-width="0.8"/></svg>
<div class="a" style="left:1006px;top:336.5px;width:13.5px;height:1px;background:#c8c8c8"></div>
<div class="a" style="left:1003px;top:341.9px;width:19.8px;height:18.400000000000034px;background:#cce8ff;border:1px solid #b8dcf8"></div>
<svg class="a" style="left:1005.50px;top:344.50px" width="14" height="14" viewBox="0 0 14 14"><path d="M3.5 3.5L9.5 9.5" stroke="#222" stroke-width="1"/><path d="M7 10L10 10L10 7Z" fill="#111"/><circle cx="2.8" cy="2.8" r="1.9" fill="#7080f8" stroke="#2a3ad0" stroke-width="0.8"/><path d="M11.3 9.3L13.3 11.3L11.3 13.3L9.3 11.3Z" fill="#c8f0c8" stroke="#30a040" stroke-width="0.9"/></svg>
<svg class="a" style="left:1005.50px;top:363.00px" width="14" height="14" viewBox="0 0 14 14"><path d="M2 12H12V2" stroke="#555" stroke-width="0.9" fill="none"/><circle cx="5" cy="5" r="1.3" fill="#40b050" stroke="#206030" stroke-width="0.5"/></svg>
<svg class="a" style="left:1005.50px;top:382.50px" width="14" height="14" viewBox="0 0 14 14"><path d="M2 12H12V2" stroke="#555" stroke-width="0.9" stroke-dasharray="1 1" fill="none"/><path d="M3 6H8M5.5 3.5V8.5" stroke="#333" stroke-width="1.1"/></svg>
<svg class="a" style="left:1005.50px;top:401.50px" width="14" height="14" viewBox="0 0 14 14"><path d="M1 14L6 1H8.5L13.5 14H10.3L9.3 11H5.2L4.2 14ZM6 8.5H8.5L7.25 4.5Z" fill="#111"/><path d="M1 12.5H13" stroke="#40b040" stroke-width="1.3"/><circle cx="2" cy="12.5" r="1.3" fill="#90d090" stroke="#2a8a3a" stroke-width="0.6"/></svg>
<div class="a" style="left:1006px;top:423.5px;width:13.5px;height:1px;background:#c8c8c8"></div>
<svg class="a" style="left:1005.50px;top:431.00px" width="14" height="14" viewBox="0 0 14 14"><defs><linearGradient id="gpg" x1="0" y1="0" x2="1" y2="1"><stop offset="0" stop-color="#fff"/><stop offset="1" stop-color="#aaa"/></linearGradient></defs><rect x="2.8" y="1" width="8.5" height="11.5" rx="1" fill="url(#gpg)" stroke="#222" stroke-width="1.1"/></svg>
<div class="a" style="left:1003px;top:448px;width:19.8px;height:19px;background:#cce8ff;border:1px solid #b8dcf8"></div>
<svg class="a" style="left:1005.50px;top:450.50px" width="14" height="14" viewBox="0 0 14 14"><path d="M1 3H13M1 5.5H13M1 8H13M1 10.5H13M3 1V13M5.5 1V13M8 1V13M10.5 1V13" stroke="#2020e0" stroke-width="1"/></svg>
<div class="a" style="left:1003px;top:468px;width:19.8px;height:18.5px;background:#cce8ff;border:1px solid #b8dcf8"></div>
<svg class="a" style="left:1005.50px;top:470.00px" width="14" height="14" viewBox="0 0 14 14"><path d="M2 1.5V12.5M12 1.5V12.5" stroke="#3050d0" stroke-width="1.4"/><path d="M4.5 12L9.5 2" stroke="#3050d0" stroke-width="1.4"/></svg>
<div class="a" style="left:13.2px;top:521.5px;width:683px;height:9.2px;background:#cdcdcd"></div>
<svg class="a" style="left:4px;top:523.5px" width="5" height="6" viewBox="0 0 5 6"><path d="M4 0.5L1 3L4 5.5" stroke="#aaa" fill="none" stroke-width="1.1"/></svg>
<svg class="a" style="left:1009px;top:524px" width="5" height="6" viewBox="0 0 5 6"><path d="M1 0.5L4 3L1 5.5" stroke="#444" fill="none" stroke-width="1.2"/></svg>
<div class="t" style="left:2.00px;top:532.55px;font-size:8.8px;color:#000;transform:scaleX(0.9137);">Fill:</div>
<div class="t" style="left:54.50px;top:532.55px;font-size:8.8px;color:#000;transform:scaleX(0.9206);">N/A</div>
<div class="t" style="left:2.00px;top:542.75px;font-size:8.8px;color:#000;transform:scaleX(0.9330);">Stroke:</div>
<div class="t" style="left:54.50px;top:542.75px;font-size:8.8px;color:#000;transform:scaleX(0.9206);">N/A</div>
<div class="t" style="left:94.60px;top:537.43px;font-size:9.3px;color:#000;transform:scaleX(0.8559);">O:</div>
<div class="a" style="left:105px;top:533.8px;width:27px;height:16.2px;background:#f0f0f0;border:1px solid #bcbcbc"></div>
<div class="t" style="left:108.00px;top:537.43px;font-size:9.3px;color:#8a8a8a;">0</div>
<div class="a" style="left:132px;top:533.8px;width:7.5px;height:16.2px;background:#ececec"></div>
<svg class="a" style="left:133.2px;top:536.5px" width="5" height="3" viewBox="0 0 5 3"><path d="M0 3L2.5 0L5 3Z" fill="#777"/></svg>
<svg class="a" style="left:133.2px;top:544.5px" width="5" height="3" viewBox="0 0 5 3"><path d="M0 0L2.5 3L5 0Z" fill="#777"/></svg>
<div class="a" style="left:142.5px;top:531.5px;width:1px;height:21.5px;background:#c8c8c8"></div>
<svg class="a" style="left:148.5px;top:538.5px" width="8" height="6" viewBox="0 0 8 6"><ellipse cx="4" cy="3" rx="3.7" ry="2.5" fill="#444"/><circle cx="4" cy="3" r="1.2" fill="#ccc"/></svg>
<svg class="a" style="left:163.5px;top:537px" width="6" height="8" viewBox="0 0 6 8"><path d="M1.5 3.5V2.5A1.5 1.5 0 0 1 4.5 2.5" stroke="#555" fill="none" stroke-width="0.9"/><rect x="0.5" y="3.5" width="5" height="4" fill="#e8d080" stroke="#666" stroke-width="0.6"/></svg>
<div class="a" style="left:173.4px;top:532.5px;width:51.1px;height:18.5px;background:#fff;border:1px solid #adadad"></div>
<div class="a" style="left:211px;top:533.5px;width:12.5px;height:16.5px;background:#e1e1e1;border-left:1px solid #cfcfcf"></div>
<svg class="a" style="left:214px;top:540px" width="7" height="4" viewBox="0 0 7 4"><path d="M0.5 0.5L3.5 3.5L6.5 0.5" stroke="#555" fill="none"/></svg>
<div class="t" style="left:176.00px;top:537.43px;font-size:9.3px;color:#000;font-weight:bold;transform:scaleX(0.7957);">•Layer 1</div>
<div class="t" style="left:226.00px;top:537.96px;font-size:9.5px;color:#000;transform:scaleX(0.9447);">No objects selected. Click, Shift+click, Alt+scroll mouse on top of objects, or drag around objects to select.</div>
<div class="a" style="left:918px;top:532px;width:1px;height:21px;background:#a8a8a8"></div>
<div class="t" style="left:921.50px;top:532.95px;font-size:8.8px;color:#000;transform:scaleX(0.7219);">X:</div>
<div class="t" style="left:921.50px;top:543.25px;font-size:8.8px;color:#000;transform:scaleX(0.7667);">Y:</div>
<div class="t" style="left:935.10px;top:533.66px;font-size:8.8px;color:#000;font-family:"Liberation Mono", monospace;transform:scaleX(0.9787);">192.16</div>
<div class="t" style="left:935.10px;top:543.96px;font-size:8.8px;color:#000;font-family:"Liberation Mono", monospace;transform:scaleX(0.9787);">191.79</div>
<div class="t" style="left:973.20px;top:537.98px;font-size:9px;color:#000;transform:scaleX(0.7627);">Z:</div>
<div class="a" style="left:981px;top:534.3px;width:34.2px;height:15.5px;background:#fff;border:1px solid #adadad"></div>
<div class="t" style="left:989.00px;top:537.73px;font-size:9.3px;color:#000;transform:scaleX(0.8276);">71%</div>
<div class="a" style="left:1016.5px;top:535px;width:7.5px;height:15px;background:#e6e6e6;border:1px solid #bdbdbd"></div>
<svg class="a" style="left:1017.8px;top:537.5px" width="5" height="3" viewBox="0 0 5 3"><path d="M0 3L2.5 0L5 3Z" fill="#222"/></svg>
<svg class="a" style="left:1017.8px;top:544.8px" width="5" height="3" viewBox="0 0 5 3"><path d="M0 0L2.5 3L5 0Z" fill="#222"/></svg>
<svg class="a" style="left:2px;top:2px" width="12" height="12.5" viewBox="0 0 12 12.5"><path d="M6 0.5L11.5 6.5L8.5 9L9 12L6 10.5L3 12L3.5 9L0.5 6.5Z" fill="#111"/><path d="M6 1.5L9 5L6 4.5L3 5Z" fill="#eee"/><path d="M4.5 6.5L7.5 6.5L6 8Z" fill="#666"/></svg>
<div class="a" style="left:932.5px;top:7.5px;width:10px;height:1px;background:#ddd"></div>
<svg class="a" style="left:965px;top:2.5px" width="12" height="10" viewBox="0 0 12 10"><rect x="2" y="3" width="6.5" height="6" fill="none" stroke="#ddd" stroke-width="1"/><path d="M4 3V1H10.5V7H8.5" fill="none" stroke="#ddd" stroke-width="1"/></svg>
<svg class="a" style="left:999.5px;top:3px" width="10" height="10" viewBox="0 0 10 10"><path d="M1 1L9 9M9 1L1 9" stroke="#e6e6e6" stroke-width="1.1"/></svg>
</body></html>
